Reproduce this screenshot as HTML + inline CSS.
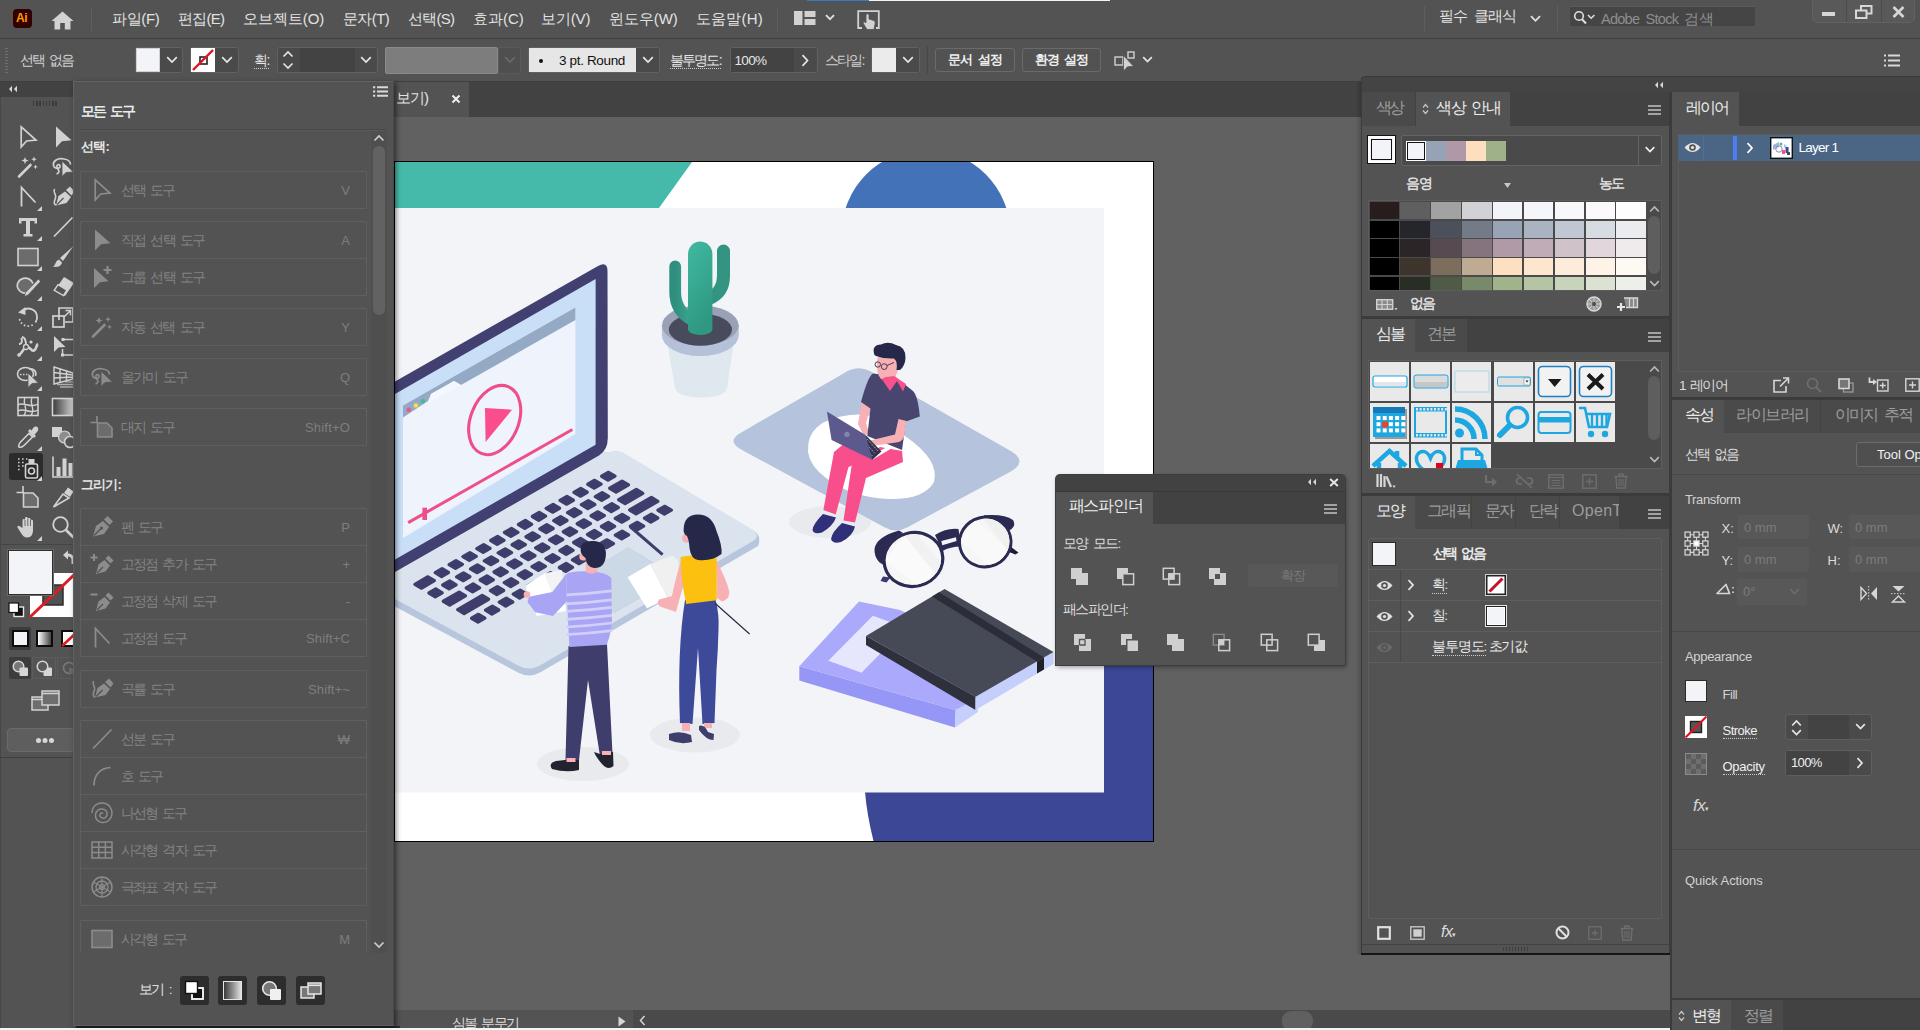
<!DOCTYPE html>
<html lang="ko"><head><meta charset="utf-8"><title>Ai</title>
<style>
*{box-sizing:border-box;margin:0;padding:0}
html,body{width:1920px;height:1030px;overflow:hidden;background:#535353;font-family:"Liberation Sans",sans-serif;color:#dedede;font-size:14px}
.a{position:absolute}
.t{position:absolute;white-space:nowrap;line-height:1;font-size:14px}
svg{position:absolute;overflow:visible}
.hl{background:#3e3e3e}
.dd{position:absolute;background:#454545;border:1px solid #5f5f5f;border-radius:3px}
.dim{color:#8a8a8a}
</style></head><body>
<!-- ===== DOC AREA ===== -->
<div class="a" style="left:394px;top:82px;width:968px;height:35px;background:#424242"></div>
<div class="a" style="left:394px;top:117px;width:968px;height:894px;background:#616161"></div>
<!-- doc tab -->
<div class="a" style="left:394px;top:82px;width:75px;height:35px;background:#535353"></div>
<div class="t" style="left:396px;top:90px;font-size:15px;color:#e4e4e4;letter-spacing:-1px">보기)</div>
<svg style="left:451px;top:94px" width="10" height="10" viewBox="0 0 10 10"><path d="M1.5,1.5 L8.5,8.5 M8.5,1.5 L1.5,8.5" stroke="#f0f0f0" stroke-width="2" fill="none"/></svg>
<!-- artboard border -->
<div class="a" style="left:394px;top:161px;width:760px;height:681px;background:#000"></div>
<svg id="art" style="left:395px;top:162px" width="758" height="679" viewBox="395 162 758 679">
<defs><linearGradient id="cg" x1="0" x2="0.35" y1="0" y2="1"><stop offset="0" stop-color="#41b9a1"/><stop offset="1" stop-color="#2f9882"/></linearGradient><linearGradient id="cg2" x1="0" x2="1"><stop offset="0" stop-color="#2f8f7e"/><stop offset="1" stop-color="#3aa892"/></linearGradient></defs>
<rect x="395" y="162" width="758" height="679" fill="#fff"/>
<polygon points="395,162 692,162 659,208 395,208" fill="#46baaa"/>
<clipPath id="ctop"><rect x="395" y="162" width="758" height="46"/></clipPath>
<circle cx="926" cy="234" r="84.4" fill="#4472b8" clip-path="url(#ctop)"/>
<path d="M1104,600 H1153 V841 H873.5 Q867,815 865,792 H1104 Z" fill="#3c4795"/>
<rect x="395" y="208" width="709" height="584.5" fill="#f3f4f8"/>
<ellipse cx="583" cy="764" rx="46" ry="17" fill="#e8eaee"/>
<ellipse cx="695" cy="735" rx="45" ry="17.5" fill="#e8eaee"/>
<ellipse cx="830" cy="522" rx="41" ry="16" fill="#e8eaee"/>
<path d="M395,470 L611,452 Q617,450 623,453 L754,531 Q762,536 758,546 L540,672.5 Q529,678.5 518,672.5 L395,606.5 Z" fill="#b7c5dd"/>
<path d="M395,470 L611,452 Q617,450 623,453 L753,530 Q761,536 753,541 L540,665.5 Q529,671.5 518,665.5 L395,599 Z" fill="#dbe4ee"/>
<polygon points="628.4,547.7 677,576.7 614.5,612.7 565.9,583.7" fill="#cbd8e5" stroke="#b9c8d8" stroke-width="0.8" stroke-dasharray="1.200 1.200"/>
<polygon points="608.6,472.3 601.6,476.3 608.0,480.1 615.0,476.1" fill="#3f3d6b" stroke="#3f3d6b" stroke-width="3.3" stroke-linejoin="round"/>
<polygon points="594.7,480.3 587.8,484.3 594.2,488.1 601.1,484.1" fill="#3f3d6b" stroke="#3f3d6b" stroke-width="3.3" stroke-linejoin="round"/>
<polygon points="580.8,488.4 573.9,492.4 580.3,496.2 587.2,492.2" fill="#3f3d6b" stroke="#3f3d6b" stroke-width="3.3" stroke-linejoin="round"/>
<polygon points="567.0,496.4 560.0,500.4 566.4,504.2 573.4,500.2" fill="#3f3d6b" stroke="#3f3d6b" stroke-width="3.3" stroke-linejoin="round"/>
<polygon points="553.1,504.4 546.2,508.4 552.5,512.2 559.5,508.2" fill="#3f3d6b" stroke="#3f3d6b" stroke-width="3.3" stroke-linejoin="round"/>
<polygon points="539.2,512.4 532.3,516.5 538.7,520.3 545.6,516.2" fill="#3f3d6b" stroke="#3f3d6b" stroke-width="3.3" stroke-linejoin="round"/>
<polygon points="525.4,520.5 518.4,524.5 524.8,528.3 531.7,524.3" fill="#3f3d6b" stroke="#3f3d6b" stroke-width="3.3" stroke-linejoin="round"/>
<polygon points="511.5,528.5 504.5,532.5 510.9,536.3 517.9,532.3" fill="#3f3d6b" stroke="#3f3d6b" stroke-width="3.3" stroke-linejoin="round"/>
<polygon points="497.6,536.5 490.7,540.5 497.1,544.3 504.0,540.3" fill="#3f3d6b" stroke="#3f3d6b" stroke-width="3.3" stroke-linejoin="round"/>
<polygon points="483.7,544.6 476.8,548.6 483.2,552.4 490.1,548.4" fill="#3f3d6b" stroke="#3f3d6b" stroke-width="3.3" stroke-linejoin="round"/>
<polygon points="469.9,552.6 462.9,556.6 469.3,560.4 476.3,556.4" fill="#3f3d6b" stroke="#3f3d6b" stroke-width="3.3" stroke-linejoin="round"/>
<polygon points="456.0,560.6 449.1,564.6 455.5,568.4 462.4,564.4" fill="#3f3d6b" stroke="#3f3d6b" stroke-width="3.3" stroke-linejoin="round"/>
<polygon points="442.1,568.7 435.2,572.7 441.6,576.5 448.5,572.5" fill="#3f3d6b" stroke="#3f3d6b" stroke-width="3.3" stroke-linejoin="round"/>
<polygon points="428.0,576.8 414.9,584.4 421.3,588.2 434.4,580.6" fill="#3f3d6b" stroke="#3f3d6b" stroke-width="3.3" stroke-linejoin="round"/>
<polygon points="622.1,481.1 609.7,488.3 616.1,492.1 628.5,484.9" fill="#3f3d6b" stroke="#3f3d6b" stroke-width="3.3" stroke-linejoin="round"/>
<polygon points="602.2,492.6 595.3,496.6 601.7,500.4 608.6,496.4" fill="#3f3d6b" stroke="#3f3d6b" stroke-width="3.3" stroke-linejoin="round"/>
<polygon points="588.4,500.7 581.4,504.7 587.8,508.5 594.8,504.5" fill="#3f3d6b" stroke="#3f3d6b" stroke-width="3.3" stroke-linejoin="round"/>
<polygon points="574.5,508.7 567.6,512.7 574.0,516.5 580.9,512.5" fill="#3f3d6b" stroke="#3f3d6b" stroke-width="3.3" stroke-linejoin="round"/>
<polygon points="560.6,516.7 553.7,520.7 560.1,524.5 567.0,520.5" fill="#3f3d6b" stroke="#3f3d6b" stroke-width="3.3" stroke-linejoin="round"/>
<polygon points="546.8,524.7 539.8,528.8 546.2,532.6 553.2,528.5" fill="#3f3d6b" stroke="#3f3d6b" stroke-width="3.3" stroke-linejoin="round"/>
<polygon points="532.9,532.8 526.0,536.8 532.3,540.6 539.3,536.6" fill="#3f3d6b" stroke="#3f3d6b" stroke-width="3.3" stroke-linejoin="round"/>
<polygon points="519.0,540.8 512.1,544.8 518.5,548.6 525.4,544.6" fill="#3f3d6b" stroke="#3f3d6b" stroke-width="3.3" stroke-linejoin="round"/>
<polygon points="505.2,548.8 498.2,552.9 504.6,556.7 511.5,552.6" fill="#3f3d6b" stroke="#3f3d6b" stroke-width="3.3" stroke-linejoin="round"/>
<polygon points="491.3,556.9 484.3,560.9 490.7,564.7 497.7,560.7" fill="#3f3d6b" stroke="#3f3d6b" stroke-width="3.3" stroke-linejoin="round"/>
<polygon points="477.4,564.9 470.5,568.9 476.9,572.7 483.8,568.7" fill="#3f3d6b" stroke="#3f3d6b" stroke-width="3.3" stroke-linejoin="round"/>
<polygon points="463.5,572.9 456.6,576.9 463.0,580.7 469.9,576.7" fill="#3f3d6b" stroke="#3f3d6b" stroke-width="3.3" stroke-linejoin="round"/>
<polygon points="449.7,581.0 442.7,585.0 449.1,588.8 456.1,584.8" fill="#3f3d6b" stroke="#3f3d6b" stroke-width="3.3" stroke-linejoin="round"/>
<polygon points="435.8,589.0 428.9,593.0 435.3,596.8 442.2,592.8" fill="#3f3d6b" stroke="#3f3d6b" stroke-width="3.3" stroke-linejoin="round"/>
<polygon points="636.4,489.5 618.7,499.8 625.1,503.6 642.8,493.3" fill="#3f3d6b" stroke="#3f3d6b" stroke-width="3.3" stroke-linejoin="round"/>
<polygon points="611.9,503.7 604.9,507.7 611.3,511.5 618.3,507.5" fill="#3f3d6b" stroke="#3f3d6b" stroke-width="3.3" stroke-linejoin="round"/>
<polygon points="598.0,511.8 591.1,515.8 597.5,519.6 604.4,515.6" fill="#3f3d6b" stroke="#3f3d6b" stroke-width="3.3" stroke-linejoin="round"/>
<polygon points="584.1,519.8 577.2,523.8 583.6,527.6 590.5,523.6" fill="#3f3d6b" stroke="#3f3d6b" stroke-width="3.3" stroke-linejoin="round"/>
<polygon points="570.3,527.8 563.3,531.8 569.7,535.6 576.6,531.6" fill="#3f3d6b" stroke="#3f3d6b" stroke-width="3.3" stroke-linejoin="round"/>
<polygon points="556.4,535.8 549.5,539.9 555.8,543.7 562.8,539.6" fill="#3f3d6b" stroke="#3f3d6b" stroke-width="3.3" stroke-linejoin="round"/>
<polygon points="542.5,543.9 535.6,547.9 542.0,551.7 548.9,547.7" fill="#3f3d6b" stroke="#3f3d6b" stroke-width="3.3" stroke-linejoin="round"/>
<polygon points="528.6,551.9 521.7,555.9 528.1,559.7 535.0,555.7" fill="#3f3d6b" stroke="#3f3d6b" stroke-width="3.3" stroke-linejoin="round"/>
<polygon points="514.8,559.9 507.8,564.0 514.2,567.8 521.2,563.7" fill="#3f3d6b" stroke="#3f3d6b" stroke-width="3.3" stroke-linejoin="round"/>
<polygon points="500.9,568.0 494.0,572.0 500.4,575.8 507.3,571.8" fill="#3f3d6b" stroke="#3f3d6b" stroke-width="3.3" stroke-linejoin="round"/>
<polygon points="487.0,576.0 480.1,580.0 486.5,583.8 493.4,579.8" fill="#3f3d6b" stroke="#3f3d6b" stroke-width="3.3" stroke-linejoin="round"/>
<polygon points="473.2,584.0 466.2,588.0 472.6,591.8 479.6,587.8" fill="#3f3d6b" stroke="#3f3d6b" stroke-width="3.3" stroke-linejoin="round"/>
<polygon points="459.2,592.1 443.3,601.3 449.7,605.1 465.5,595.9" fill="#3f3d6b" stroke="#3f3d6b" stroke-width="3.3" stroke-linejoin="round"/>
<polygon points="651.4,497.5 629.7,510.0 636.1,513.9 657.8,501.3" fill="#3f3d6b" stroke="#3f3d6b" stroke-width="3.3" stroke-linejoin="round"/>
<polygon points="622.2,514.4 615.2,518.4 621.6,522.2 628.6,518.2" fill="#3f3d6b" stroke="#3f3d6b" stroke-width="3.3" stroke-linejoin="round"/>
<polygon points="608.3,522.5 601.4,526.5 607.8,530.3 614.7,526.3" fill="#3f3d6b" stroke="#3f3d6b" stroke-width="3.3" stroke-linejoin="round"/>
<polygon points="594.4,530.5 587.5,534.5 593.9,538.3 600.8,534.3" fill="#3f3d6b" stroke="#3f3d6b" stroke-width="3.3" stroke-linejoin="round"/>
<polygon points="580.6,538.5 573.6,542.5 580.0,546.3 587.0,542.3" fill="#3f3d6b" stroke="#3f3d6b" stroke-width="3.3" stroke-linejoin="round"/>
<polygon points="566.7,546.5 559.8,550.6 566.2,554.4 573.1,550.3" fill="#3f3d6b" stroke="#3f3d6b" stroke-width="3.3" stroke-linejoin="round"/>
<polygon points="552.8,554.6 545.9,558.6 552.3,562.4 559.2,558.4" fill="#3f3d6b" stroke="#3f3d6b" stroke-width="3.3" stroke-linejoin="round"/>
<polygon points="539.0,562.6 532.0,566.6 538.4,570.4 545.4,566.4" fill="#3f3d6b" stroke="#3f3d6b" stroke-width="3.3" stroke-linejoin="round"/>
<polygon points="525.1,570.6 518.2,574.6 524.5,578.5 531.5,574.4" fill="#3f3d6b" stroke="#3f3d6b" stroke-width="3.3" stroke-linejoin="round"/>
<polygon points="511.2,578.7 504.3,582.7 510.7,586.5 517.6,582.5" fill="#3f3d6b" stroke="#3f3d6b" stroke-width="3.3" stroke-linejoin="round"/>
<polygon points="497.4,586.7 490.4,590.7 496.8,594.5 503.7,590.5" fill="#3f3d6b" stroke="#3f3d6b" stroke-width="3.3" stroke-linejoin="round"/>
<polygon points="482.2,595.4 457.7,609.7 464.1,613.5 488.6,599.2" fill="#3f3d6b" stroke="#3f3d6b" stroke-width="3.3" stroke-linejoin="round"/>
<polygon points="665.0,506.3 658.0,510.3 664.4,514.1 671.3,510.1" fill="#3f3d6b" stroke="#3f3d6b" stroke-width="3.3" stroke-linejoin="round"/>
<polygon points="651.4,514.2 644.4,518.2 650.8,522.0 657.8,518.0" fill="#3f3d6b" stroke="#3f3d6b" stroke-width="3.3" stroke-linejoin="round"/>
<polygon points="637.4,522.3 630.4,526.3 636.8,530.1 643.7,526.1" fill="#3f3d6b" stroke="#3f3d6b" stroke-width="3.3" stroke-linejoin="round"/>
<polygon points="622.2,531.1 615.3,535.1 621.7,538.9 628.6,534.9" fill="#3f3d6b" stroke="#3f3d6b" stroke-width="3.3" stroke-linejoin="round"/>
<polygon points="607.1,539.8 600.2,543.8 606.6,547.6 613.5,543.6" fill="#3f3d6b" stroke="#3f3d6b" stroke-width="3.3" stroke-linejoin="round"/>
<polygon points="592.6,548.2 585.6,552.3 592.0,556.1 598.9,552.1" fill="#3f3d6b" stroke="#3f3d6b" stroke-width="3.3" stroke-linejoin="round"/>
<polygon points="579.4,555.9 572.4,559.9 578.8,563.7 585.8,559.7" fill="#3f3d6b" stroke="#3f3d6b" stroke-width="3.3" stroke-linejoin="round"/>
<polygon points="566.2,563.5 559.3,567.5 565.7,571.3 572.6,567.3" fill="#3f3d6b" stroke="#3f3d6b" stroke-width="3.3" stroke-linejoin="round"/>
<polygon points="550.5,572.6 543.6,576.6 550.0,580.4 556.9,576.4" fill="#3f3d6b" stroke="#3f3d6b" stroke-width="3.3" stroke-linejoin="round"/>
<polygon points="534.0,582.1 527.1,586.2 533.5,590.0 540.4,585.9" fill="#3f3d6b" stroke="#3f3d6b" stroke-width="3.3" stroke-linejoin="round"/>
<polygon points="520.2,590.2 513.2,594.2 519.6,598.0 526.5,594.0" fill="#3f3d6b" stroke="#3f3d6b" stroke-width="3.3" stroke-linejoin="round"/>
<polygon points="506.3,598.2 499.3,602.2 505.7,606.0 512.7,602.0" fill="#3f3d6b" stroke="#3f3d6b" stroke-width="3.3" stroke-linejoin="round"/>
<polygon points="492.4,606.2 485.5,610.2 491.9,614.0 498.8,610.0" fill="#3f3d6b" stroke="#3f3d6b" stroke-width="3.3" stroke-linejoin="round"/>
<polygon points="478.5,614.3 471.6,618.3 478.0,622.1 484.9,618.1" fill="#3f3d6b" stroke="#3f3d6b" stroke-width="3.3" stroke-linejoin="round"/>
<path d="M395,381.5 L598,266 Q607.5,261 607.5,271 L607.8,438 Q607.8,450 599,455.5 L395,572 Z" fill="#414070"/>
<polygon points="395,394 595.6,279 595.6,444.8 395,559.5" fill="#c9dff8"/>
<polygon points="403,405.5 575.4,307.4 575.4,434 403,538" fill="#eef3fc"/>
<polygon points="403,405.5 575.4,307.4 575.4,320 461,385 454,381 431,394 428,401 403,417.6" fill="#94a9c3"/>
<polygon points="431,394 454,381 461,385 429,403" fill="#f4f7fd"/>
<circle cx="408.8" cy="409.7" r="2.3" fill="#ee5588"/><circle cx="415.9" cy="405.5" r="2.3" fill="#f3e04f"/><circle cx="423" cy="401.3" r="2.3" fill="#46b89d"/>
<ellipse cx="494.5" cy="420" rx="24" ry="36" transform="rotate(22 494.5 420.5)" fill="none" stroke="#ef4f88" stroke-width="3.1"/>
<polygon points="485,408 512,409.7 485.6,442" fill="#fa4d8c"/>
<line x1="572.4" y1="429.5" x2="408.2" y2="522.6" stroke="#ef4f88" stroke-width="3"/>
<line x1="424.7" y1="507.7" x2="424.7" y2="520" stroke="#ef4f88" stroke-width="4.6"/>
<path d="M666.500,338 L675,388 Q677,394 686,396 Q700,399 716,396 Q725,394 727,388 L734.500,338 Z" fill="#dfe7ef"/>
<ellipse cx="700.3" cy="335.5" rx="38.400" ry="20.500" fill="#b5c0d9"/><rect x="661.9" y="325.4" width="76.800" height="10.100" fill="#b5c0d9"/>
<ellipse cx="700.3" cy="325.4" rx="38.400" ry="20" fill="#9aa1b6"/>
<ellipse cx="700.4" cy="329.6" rx="31.600" ry="16.200" fill="#474b5c"/>
<path d="M675.2,266.500 V292 Q675.200,311 692,320" fill="none" stroke="url(#cg2)" stroke-width="11.800" stroke-linecap="round"/>
<path d="M723.5,251 V276 Q723.500,293 708,299" fill="none" stroke="#339581" stroke-width="13" stroke-linecap="round"/>
<path d="M688,253.800 a12.200,12.200 0 0 1 24.400,0 V329 a12.200,6 0 0 1 -24.400,0 Z" fill="url(#cg)"/>
<path d="M743,431.5 L846,372 Q858,365 870,371 L1009,450 Q1030,461 1009,472.5 L908,527 Q896,534 884,527 L743,450.5 Q724,441 743,431.5 Z" fill="#b5c3dc"/>
<path d="M808,452 Q806,420 850,415 Q880,411 905,436 Q940,460 934,482 Q924,500 888,499 Q850,497 826,478 Q810,466 808,452 Z" fill="#fff"/>
<path d="M902,451 L880,447 L852,463 L843.500,520.500 L855,522.500 L866,478 L903,462 Z" fill="#f94e8c"/>
<path d="M872,447 L846,442 L834,452 L823.400,510 L835.700,514.500 L848.500,467 L876,456 Z" fill="#f94e8c"/>
<path d="M823,514 L836,517.500 Q833,526 822,532.500 Q814,535 812.500,530 Q813,524 823,514 Z" fill="#2f2f7a"/>
<path d="M842,523 L855,526.500 Q853,536 841,542 Q833,544.500 831,539 Q832,532 842,523 Z" fill="#2f2f7a"/>
<path d="M862,402 L858,424 L864,436 L869,433 L866,423 L870.500,407 Z" fill="#f7b1b5"/>
<path d="M873,373.500 Q868,376 861,402 L870.500,408.500 L867.300,436 L902,450 L906,421.500 L919.800,416.500 Q918,396 913,391 L894,376 Z" fill="#48466f"/>
<path d="M906.500,421 L904,437 Q902,442 896,442.500 L871,446 L868,441 L895,434.500 L898.500,419 Z" fill="#f7b1b5"/>
<path d="M877,360 Q876,374 881,379 L893,383 L899,368 L896,352 L880,352 Z" fill="#f7b1b5"/>
<polygon points="881.5,378.800 890,391 897,381 903,391.500 906,384 894,376 886,377" fill="#f8528d"/>
<path d="M874.500,355 Q871,345 881,344.500 Q888,341 896,345 Q906,347 905.500,358 Q905,366 900,370 L896.500,370 Q898,362 894,358.500 Q884,359 876,356 Z" fill="#252849"/>
<circle cx="877.8" cy="364.5" r="2.700" fill="none" stroke="#3a2a4a" stroke-width="0.900"/><circle cx="884.2" cy="366.6" r="2.900" fill="none" stroke="#3a2a4a" stroke-width="0.900"/><line x1="887" y1="365.5" x2="894" y2="362.500" stroke="#3a2a4a" stroke-width="0.900"/>
<polygon points="872.3,459.700 892.700,447.700 890,445.500 870,456" fill="#fff"/>
<polygon points="865.6,434.900 881.500,451.600 872.300,459.700 860,449" fill="#34334f"/>
<path d="M867,439 L878,451 M864.500,442 L875,453.500 M862.500,445.500 L873,456.500" stroke="#cfd3e4" stroke-width="0.800" stroke-dasharray="1.200 1"/>
<polygon points="826.9,411.400 865.600,434.900 872.300,459.700 831.600,440" fill="#5c5a8c"/>
<circle cx="846.9" cy="434.4" r="2.700" fill="#8583ad"/>
<path d="M874.5,549 Q876,537 899,530.5 L903,533 Q888,540 884.5,553 Q883,560 885,566 L879,562 Q874,556 874.5,549 Z" fill="#2b2a52"/>
<path d="M883,576.5 L880.500,581 L886.500,582.500 L890.500,577.500 Z" fill="#3a3970"/>
<path d="M984,515.300 Q1004,513.500 1013,520 Q1016.500,525 1011,529.500 L1007,531 Q1003,521 985,518.500 Z" fill="#2b2a52"/>
<path d="M1010.500,546.500 L1018.500,552.500 L1015.500,554.500 L1009,552 Z" fill="#1d1c3a"/>
<path d="M935,535 Q947,527.500 958.500,529 L961,546.500 Q950,546.500 942.500,551 Z" fill="#2b2a52"/>
<polygon points="941.3,541 956,537.300 956.500,541 942.300,545.300" fill="#f3f4f8"/>
<ellipse cx="913.4" cy="559.5" rx="29.500" ry="26.800" transform="rotate(-14 913.4 559.5)" fill="#f6f6f6" stroke="#2b2a52" stroke-width="3.200"/>
<ellipse cx="985.2" cy="542" rx="25.800" ry="24.800" transform="rotate(-14 985.2 542)" fill="#f6f6f6" stroke="#2b2a52" stroke-width="3"/>
<clipPath id="lc1"><ellipse cx="913.4" cy="559.5" rx="28" ry="25.300" transform="rotate(-14 913.4 559.5)"/></clipPath><clipPath id="lc2"><ellipse cx="985.2" cy="542" rx="24.300" ry="23.300" transform="rotate(-14 985.2 542)"/></clipPath>
<g clip-path="url(#lc1)"><polygon points="885,560 905,536 955,590 935,600" fill="#fafafa"/><polygon points="900,530 912,528 960,585 950,592" fill="#f1f1f1"/></g>
<g clip-path="url(#lc2)"><polygon points="960,540 975,520 1020,560 1000,575" fill="#f9f9f9"/><polygon points="978,512 990,512 1022,548 1012,556" fill="#f0f0f0"/></g>
<polygon points="799.3,666.2 955.7,710 955,727.6 799.3,680.6" fill="#9596f6"/>
<polygon points="955.7,710 978,698 978,712 955,727.6" fill="#c4d0fb"/>
<polygon points="859,601.4 799.3,666.2 955.7,710 1030,670 900,610" fill="#aaa9fb"/>
<polygon points="872.8,615.7 906,627.5 861.5,672.8 828.3,660.8" fill="#e6e6fd"/>
<polygon points="866,636 975.5,696.7 975.5,710 866,645" fill="#2e303b"/>
<polygon points="975.5,696.7 1053.5,652 1053.5,664 975.5,710" fill="#c4d0fb"/>
<polygon points="944.6,589 1053.5,652 975.5,696.7 866,636" fill="#464a57"/>
<polygon points="932,596.4 939,592.2 1044,657.4 1037,661.5" fill="#2b2d38"/>
<polygon points="1037,661.5 1044,657.4 1044,669.5 1037,673.5" fill="#1f2029"/>
<path d="M568.5,646 L607,644 L612.5,754 L600,756 L588,680 L579,760 L565.5,760 Z" fill="#3f3d6b"/>
<path d="M565,760 L579,760 L579,770 Q566,773 552,769 Q548,763 556,761 Z" fill="#22232f"/><path d="M600,754 L613,752 L613.5,766 Q608,771 602,764 Q596,757 594,752 Z" fill="#22232f"/>
<rect x="566.5" y="758" width="9" height="4" fill="#f7b1b5"/><rect x="602" y="751" width="9" height="4" fill="#f7b1b5"/>
<polygon points="525,585.800 544.500,573.400 561.600,570.300 566,611 536.800,616" fill="#fff"/>
<polygon points="544.5,573.400 561.600,570.300 566,600 552,594" fill="#f3f3f3"/>
<path d="M566.3,574 L552.300,592 L529,596.700 L527.400,602 L535.200,612.200 L553,616 L567,601.300 Z" fill="#a9a5f5"/>
<circle cx="527" cy="594.5" r="3.300" fill="#f7b1b5"/>
<path d="M566.3,574 Q572,570.500 590,571.500 Q606,572 611.300,578 L612,621.500 Q611,634 606.700,644.800 L569.400,647 L567,601 Z" fill="#a9a5f5"/>
<path d="M566.5,594.8 Q590,593.5 612,590.8" fill="none" stroke="#d3cffb" stroke-width="2.700"/>
<path d="M566.5,603.8 Q590,602.5 612,599.8" fill="none" stroke="#d3cffb" stroke-width="2.700"/>
<path d="M566.5,611.4 Q590,610.1 612,607.4" fill="none" stroke="#d3cffb" stroke-width="2.700"/>
<path d="M566.5,619.3 Q590,618.0 612,615.3" fill="none" stroke="#d3cffb" stroke-width="2.700"/>
<path d="M566.5,627.0 Q590,625.7 612,623.0" fill="none" stroke="#d3cffb" stroke-width="2.700"/>
<path d="M566.5,634.6 Q590,633.3 612,630.6" fill="none" stroke="#d3cffb" stroke-width="2.700"/>
<path d="M585.7,560 L597.300,560 L597.300,572 Q591,575 585.700,572 Z" fill="#f7b1b5"/>
<circle cx="583.3" cy="556.5" r="4" fill="#f7b1b5"/>
<path d="M580.5,549 Q581,540.500 593,541 Q606.500,541.500 605.900,555 Q605,568.500 594,568 Q586.500,567 585.500,558 Q580.500,555 580.500,549 Z" fill="#252849"/>
<polygon points="627.6,577.200 650.200,564 668,598.200 647,608.300" fill="#fff"/>
<polygon points="650.2,564 672,555.500 677.400,559.400 684,592 668,598.200" fill="#f0f0f0"/>
<path d="M685,600 L715.400,599 Q719.500,615 718.500,630 Q718,650 716.500,670 L714.500,723 L702.500,724 L698,648 L692.500,724 L680,723 Q677,650 685,600 Z" fill="#3d4a9a"/>
<rect x="682" y="723" width="8" height="8" fill="#f7b1b5"/><rect x="704" y="723" width="8" height="5" fill="#f7b1b5"/>
<path d="M669,734 Q680,730 691,735 L692,742 Q680,745 669,740 Z" fill="#3f3d6b"/><path d="M699,726 Q704,724 708,732 L714,734 L713.5,740 Q706,740 699,730 Z" fill="#3f3d6b"/>
<path d="M681.5,559 Q675,580 672,596 L659,599.500 Q656,603 660,606.500 L676,612 Q682,590 688,568 Z" fill="#f7b1b5"/>
<path d="M716,560 Q726,578 729.400,592 Q729,600 722,601.500 L717,598 Z" fill="#f7b1b5"/>
<path d="M680.5,557 Q692,553.500 716.500,558 L716.800,600.300 L686.200,604 Q681,580 680.500,557 Z" fill="#fcc010"/>
<circle cx="687" cy="538" r="5" fill="#f7b1b5"/>
<path d="M683.6,530 Q683.600,515 698,514.600 Q712,514.600 716.500,531 Q722.500,546 721.500,554 Q712,561.500 698,560 Q691,559 689.500,548 Q689,540 687,536 Q683.600,534 683.600,530 Z" fill="#252849"/>
<line x1="630" y1="526.5" x2="662.6" y2="554.7" stroke="#3f3d6b" stroke-width="3"/>
<line x1="715" y1="603.2" x2="749.6" y2="634" stroke="#2b2b45" stroke-width="1.300"/>
</svg>
<!-- ===== STATUS / SCROLL ===== -->
<div class="a" style="left:394px;top:1010px;width:239px;height:18px;background:#535353"></div>
<div class="a" style="left:633px;top:1010px;width:729px;height:18px;background:#4a4a4a"></div>
<div class="a" style="left:394px;top:1010px;width:968px;height:18px;overflow:hidden"><div class="t" style="left:58px;top:6px;font-size:14px;color:#dcdcdc;word-spacing:3px;letter-spacing:-1.832px">심볼 분무기</div></div>
<svg style="left:618px;top:1016px" width="8" height="11" viewBox="0 0 8 11"><path d="M0.500,0.500 L7.500,5.500 L0.500,10.500 Z" fill="#d6d6d6"/></svg>
<svg style="left:639px;top:1015px" width="7" height="11" viewBox="0 0 7 11"><path d="M5.500,1 L1.500,5.500 L5.500,10" stroke="#d6d6d6" stroke-width="1.500" fill="none"/></svg>
<div class="a" style="left:1282px;top:1011px;width:31px;height:20px;background:#606060;border-radius:9px"></div>
<div class="a" style="left:0;top:1026px;width:400px;height:3px;background:#2a2a2a"></div>
<div class="a" style="left:0;top:1028.4px;width:1670px;height:1.6px;background:#f4f4f4;z-index:50"></div>
<!-- ===== MENU BAR ===== -->
<div class="a" style="left:0;top:0;width:1920px;height:38px;background:#535353"></div>
<div class="a hl" style="left:0;top:38px;width:1920px;height:1px"></div>
<div class="a" style="left:807px;top:0;width:62px;height:1px;background:#2f7fc1"></div>
<div class="a" style="left:869px;top:0;width:241px;height:1px;background:#f4f4f4"></div>
<!-- Ai logo -->
<div class="a" style="left:13px;top:9px;width:19px;height:19px;border-radius:4px;background:#330000"></div>
<div class="t" style="left:16px;top:12px;font-size:12px;font-weight:bold;color:#ff9a00;letter-spacing:-0.3px">Ai</div>
<!-- home -->
<svg style="left:51px;top:11px" width="23" height="19" viewBox="0 0 23 19"><path d="M11.5,0.5 L22.5,10 L19.5,10 L19.5,18.5 L13.8,18.5 L13.8,12 L9.2,12 L9.2,18.5 L3.5,18.5 L3.5,10 L0.5,10 Z" fill="#d2d2d2"/></svg>
<div class="a" style="left:91px;top:7px;width:1px;height:24px;background:#5f5f5f"></div>
<div class="t mi" style="left:112px;letter-spacing:-0.331px">파일(F)</div>
<div class="t mi" style="left:178px;letter-spacing:-0.75px">편집(E)</div>
<div class="t mi" style="left:243px;letter-spacing:-0.06px">오브젝트(O)</div>
<div class="t mi" style="left:343px;letter-spacing:-0.581px">문자(T)</div>
<div class="t mi" style="left:408px;letter-spacing:-0.75px">선택(S)</div>
<div class="t mi" style="left:473px;letter-spacing:-0.016px">효과(C)</div>
<div class="t mi" style="left:541px;letter-spacing:-0.15px">보기(V)</div>
<div class="t mi" style="left:609px;letter-spacing:-0.068px">윈도우(W)</div>
<div class="t mi" style="left:696px;letter-spacing:0.195px">도움말(H)</div>
<style>.mi{top:11px;font-size:15px;color:#e2e2e2}</style>
<div class="a" style="left:777px;top:7px;width:1px;height:24px;background:#5f5f5f"></div>
<!-- workspace icon -->
<svg style="left:794px;top:11px" width="22" height="15" viewBox="0 0 22 15"><rect x="0" y="0" width="8.5" height="14" fill="#d2d2d2"/><rect x="10.5" y="0" width="11" height="6" fill="#d2d2d2"/><rect x="10.5" y="8" width="11" height="6" fill="#d2d2d2"/></svg>
<svg style="left:825px;top:14px" width="10" height="7" viewBox="0 0 10 7"><path d="M1,1.2 L5,5.2 L9,1.2" stroke="#e0e0e0" stroke-width="1.8" fill="none"/></svg>
<!-- touch icon -->
<svg style="left:857px;top:10px" width="23" height="20" viewBox="0 0 23 20"><path d="M5,18 H1.2 V1.2 H21.8 V18 H19" stroke="#d2d2d2" stroke-width="1.8" fill="none"/><path d="M9,4.5 q1.6,-1.4 3,0 V9 l5,1.6 q1.6,0.8 1.2,2.6 L17,19.5 H10 L6,13 q0.4,-1.8 2.2,-0.8 L9,13 Z" fill="#d2d2d2" stroke="#535353" stroke-width="0.8"/></svg>
<!-- workspace switcher -->
<div class="a" style="left:1424px;top:6px;width:1px;height:25px;background:#5f5f5f"></div>
<div class="t" style="left:1439px;top:8px;font-size:15px;color:#e2e2e2;letter-spacing:0.4px;word-spacing:3px;letter-spacing:-0.745px">필수 클래식</div>
<svg style="left:1530px;top:15px" width="11" height="8" viewBox="0 0 11 8"><path d="M1,1.2 L5.5,5.8 L10,1.2" stroke="#e0e0e0" stroke-width="1.8" fill="none"/></svg>
<div class="a" style="left:1557px;top:6px;width:1px;height:25px;background:#5f5f5f"></div>
<!-- search -->
<div class="a" style="left:1570px;top:6px;width:185px;height:20px;background:#454545;border-top:1px solid #5a5a5a"></div>
<svg style="left:1573px;top:10px" width="24" height="15" viewBox="0 0 24 15"><circle cx="6" cy="6" r="4.3" stroke="#e0e0e0" stroke-width="1.6" fill="none"/><path d="M9,9.3 L13,13.5" stroke="#e0e0e0" stroke-width="2"/><path d="M15,5 L18.2,8.2 L21.4,5" stroke="#e0e0e0" stroke-width="1.5" fill="none"/></svg>
<div class="t" style="left:1601px;top:12px;font-size:14.5px;color:#8e8e8e;word-spacing:3px;letter-spacing:-0.732px">Adobe Stock 검색</div>
<div class="a" style="left:1570px;top:26px;width:185px;height:6px;background:#535353"></div>
<!-- window controls -->
<div class="a" style="left:1812px;top:-3px;width:103px;height:26px;background:#595959;border:1px solid #626262;border-radius:5px"></div>
<div class="a" style="left:1846px;top:0;width:1px;height:22px;background:#4c4c4c"></div>
<div class="a" style="left:1881px;top:0;width:1px;height:22px;background:#4c4c4c"></div>
<div class="a" style="left:1822px;top:12px;width:13px;height:4px;background:#d6d6d6"></div>
<svg style="left:1855px;top:5px" width="18" height="15" viewBox="0 0 18 15"><rect x="6" y="1" width="10.5" height="7.5" stroke="#d6d6d6" stroke-width="2" fill="#595959"/><rect x="1" y="5.5" width="10.5" height="7.5" stroke="#d6d6d6" stroke-width="2" fill="#595959"/></svg>
<svg style="left:1892px;top:6px" width="13" height="12" viewBox="0 0 13 12"><path d="M1.5,1 L11.5,11 M11.5,1 L1.5,11" stroke="#d6d6d6" stroke-width="2.6"/></svg>
<!-- ===== CONTROL BAR ===== -->
<div class="a" style="left:0;top:39px;width:1920px;height:42px;background:#535353"></div>
<div class="a hl" style="left:0;top:81px;width:1362px;height:1px"></div>
<div class="a" style="left:5px;top:48px;width:3px;height:25px;background:repeating-linear-gradient(#6e6e6e 0 1px,transparent 1px 3px)"></div>
<div class="t" style="left:20px;top:53px;font-size:14px;color:#cfcfcf;letter-spacing:0.3px;word-spacing:3px;letter-spacing:-2.033px">선택 없음</div>
<style>
.cb{position:absolute;top:47px;height:26px;border:1px solid #616161;border-radius:3px;background:#4a4a4a}
.cv{position:absolute}
</style>
<!-- fill -->
<div class="cb" style="left:135px;width:48px"></div>
<div class="a" style="left:136px;top:48px;width:24px;height:24px;background:#f3f4f8;border:1px solid #d0d0d0"></div>
<svg class="cv" style="left:166px;top:56px" width="12" height="8" viewBox="0 0 12 8"><path d="M1.2,1.2 L6,6 L10.8,1.2" stroke="#e6e6e6" stroke-width="1.7" fill="none"/></svg>
<!-- stroke -->
<div class="cb" style="left:190px;width:49px"></div>
<svg style="left:191px;top:48px" width="24" height="24" viewBox="0 0 24 24"><rect width="24" height="24" fill="#fff"/><rect x="9" y="9" width="7" height="7" fill="none" stroke="#222" stroke-width="1.6"/><path d="M2,22 L22,2" stroke="#e0141e" stroke-width="2.4"/></svg>
<svg class="cv" style="left:221px;top:56px" width="12" height="8" viewBox="0 0 12 8"><path d="M1.2,1.2 L6,6 L10.8,1.2" stroke="#e6e6e6" stroke-width="1.7" fill="none"/></svg>
<div class="t" style="left:254px;top:53px;font-size:14px;color:#e6e6e6;border-bottom:1px dotted #cfcfcf;padding-bottom:1px;letter-spacing:-1.533px">획:</div>
<!-- stroke weight -->
<div class="cb" style="left:277px;width:101px"></div>
<div class="a" style="left:300px;top:48px;width:55px;height:24px;background:#434343"></div>
<svg class="cv" style="left:282px;top:50px" width="12" height="20" viewBox="0 0 12 20"><path d="M1.5,6.5 L6,2 L10.5,6.5 M1.5,13.5 L6,18 L10.5,13.5" stroke="#e6e6e6" stroke-width="1.6" fill="none"/></svg>
<svg class="cv" style="left:360px;top:56px" width="12" height="8" viewBox="0 0 12 8"><path d="M1.2,1.2 L6,6 L10.8,1.2" stroke="#e6e6e6" stroke-width="1.7" fill="none"/></svg>
<!-- width profile -->
<div class="a" style="left:385px;top:47px;width:113px;height:27px;background:#7d7d7d;border:1px solid #8a8a8a;border-radius:2px"></div>
<div class="a" style="left:498px;top:47px;width:23px;height:27px;background:#4f4f4f;border:1px solid #5a5a5a;border-radius:0 3px 3px 0"></div>
<svg class="cv" style="left:504px;top:56px" width="12" height="8" viewBox="0 0 12 8"><path d="M1.2,1.2 L6,6 L10.8,1.2" stroke="#6a6a6a" stroke-width="1.7" fill="none"/></svg>
<!-- brush -->
<div class="cb" style="left:528px;width:132px"></div>
<div class="a" style="left:529px;top:48px;width:107px;height:24px;background:#e6e6e6"></div>
<div class="a" style="left:539px;top:58.5px;width:4px;height:4px;border-radius:2px;background:#111"></div>
<div class="t" style="left:559px;top:54px;font-size:13.5px;color:#111;letter-spacing:-0.25px;letter-spacing:-0.347px">3 pt. Round</div>
<svg class="cv" style="left:642px;top:56px" width="12" height="8" viewBox="0 0 12 8"><path d="M1.2,1.2 L6,6 L10.8,1.2" stroke="#e6e6e6" stroke-width="1.7" fill="none"/></svg>
<div class="t" style="left:669.5px;top:53px;font-size:14px;color:#e6e6e6;border-bottom:1px dotted #cfcfcf;padding-bottom:1px;letter-spacing:-0.3px;letter-spacing:-1.678px">불투명도:</div>
<!-- opacity -->
<div class="cb" style="left:730px;width:88px"></div>
<div class="a" style="left:731px;top:48px;width:63px;height:24px;background:#434343"></div>
<div class="t" style="left:734.5px;top:54px;font-size:13.5px;color:#e6e6e6;letter-spacing:-0.3px;letter-spacing:-0.638px">100%</div>
<svg class="cv" style="left:801px;top:54px" width="8" height="13" viewBox="0 0 8 13"><path d="M1.5,1.2 L6.5,6.5 L1.5,11.8" stroke="#e6e6e6" stroke-width="1.7" fill="none"/></svg>
<div class="t" style="left:824.5px;top:53px;font-size:14px;color:#cfcfcf;letter-spacing:0.2px;letter-spacing:-1.66px">스타일:</div>
<!-- style -->
<div class="cb" style="left:871px;width:49px"></div>
<div class="a" style="left:872px;top:48px;width:24px;height:24px;background:#ebebeb"></div>
<svg class="cv" style="left:902px;top:56px" width="12" height="8" viewBox="0 0 12 8"><path d="M1.2,1.2 L6,6 L10.8,1.2" stroke="#e6e6e6" stroke-width="1.7" fill="none"/></svg>
<div class="a" style="left:927px;top:46px;width:1px;height:28px;background:#474747"></div>
<!-- buttons -->
<div class="a btn" style="left:935px;width:80px;word-spacing:3px;letter-spacing:-0.925px">문서 설정</div>
<div class="a btn" style="left:1022px;width:79px;word-spacing:3px;letter-spacing:-0.925px">환경 설정</div>
<style>.btn{top:48px;height:24px;border:1px solid #6a6a6a;border-radius:3px;background:#525252;color:#efefef;font-size:13px;font-weight:bold;text-align:center;line-height:22px;letter-spacing:0.2px}</style>
<svg style="left:1114px;top:50px" width="22" height="22" viewBox="0 0 22 22"><rect x="1" y="7" width="8" height="8" fill="none" stroke="#d2d2d2" stroke-width="1.4"/><rect x="14" y="2" width="6" height="6" fill="none" stroke="#d2d2d2" stroke-width="1.4"/><path d="M9.5,5.5 L9.5,21 L13.5,16.8 L19.5,16.2 Z" fill="#d2d2d2" stroke="#535353" stroke-width="0.8"/></svg>
<svg class="cv" style="left:1142px;top:56px" width="11" height="8" viewBox="0 0 11 8"><path d="M1.2,1.2 L5.5,5.6 L9.8,1.2" stroke="#e6e6e6" stroke-width="1.7" fill="none"/></svg>
<!-- list icon far right -->
<svg style="left:1884px;top:54px" width="16" height="13" viewBox="0 0 16 13"><path d="M0,1.5 H2 M4,1.5 H16 M0,6.5 H2 M4,6.5 H16 M0,11.5 H2 M4,11.5 H16" stroke="#d8d8d8" stroke-width="2"/></svg>
<!-- ===== LEFT TOOLBAR ===== -->
<div class="a" style="left:0;top:82px;width:76px;height:948px;background:#535353"></div>
<div class="a" style="left:0;top:82px;width:1px;height:946px;background:#474747"></div>
<div class="a" style="left:0;top:82px;width:74px;height:15px;background:#424242"></div>
<svg style="left:8px;top:85px" width="10" height="8" viewBox="0 0 10 8"><path d="M4,0.8 L1,4 L4,7.2 Z M9,0.8 L6,4 L9,7.2 Z" fill="#d8d8d8"/></svg>
<div class="a" style="left:33px;top:101px;width:24px;height:5px;background:repeating-linear-gradient(90deg,#3b3b3b 0 1.4px,transparent 1.4px 3.2px)"></div>
<div class="a" style="left:0;top:544px;width:74px;height:1px;background:#454545"></div>
<div class="a" style="left:0;top:757px;width:74px;height:1px;background:#3f3f3f"></div>
<svg width="0" height="0" style="left:0;top:0"><defs>
<symbol id="i-sel" viewBox="0 0 24 24"><path d="M5.2,1.8 L5.2,22 L10.6,16 L20,15 Z" fill="none" stroke="currentColor" stroke-width="1.7" stroke-linejoin="miter"/></symbol>
<symbol id="i-dsel" viewBox="0 0 24 24"><path d="M5,1.5 L5,22.5 L11,16.2 L20.5,15.2 Z" fill="currentColor"/></symbol>
<symbol id="i-gsel" viewBox="0 0 24 24"><path d="M4,3 L4,23 L10,17.2 L18.5,16.2 Z" fill="currentColor"/><path d="M17.5,1 V9 M13.5,5 H21.500" stroke="currentColor" stroke-width="2.2"/></symbol>
<symbol id="i-wand" viewBox="0 0 24 24"><path d="M3,21.5 L14.5,10" stroke="currentColor" stroke-width="2.6" stroke-linecap="round"/><path d="M9,2 l1,2.6 2.600,1 -2.600,1 -1,2.600 -1,-2.600 -2.600,-1 2.600,-1z M18,1.500 l0.800,2 2,0.800 -2,0.800 -0.800,2 -0.800,-2 -2,-0.800 2,-0.800z M19.500,9.500 l0.700,1.700 1.700,0.700 -1.700,0.700 -0.700,1.700 -0.700,-1.700 -1.700,-0.700 1.700,-0.700z" fill="currentColor"/></symbol>
<symbol id="i-lasso" viewBox="0 0 24 24"><path d="M13,4 C6,2.500 1.500,6.500 2.500,10.500 C3.200,13 6,14 8,13 C10,12 9,9 6.800,9.800 C5,10.500 6,13.500 7.500,15 C8.500,16.500 7.500,18.500 5.500,19" fill="none" stroke="currentColor" stroke-width="1.7"/><path d="M13,4 C17,4.500 19.500,7 19.500,9.500" fill="none" stroke="currentColor" stroke-width="1.700"/><path d="M11,6 L11,21.500 L15,17.500 L22.500,17 Z" fill="currentColor" stroke="#535353" stroke-width="0.800"/></symbol>
<symbol id="i-anchor" viewBox="0 0 24 24"><path d="M5.500,21.500 V2.500 L19.500,17.500" fill="none" stroke="currentColor" stroke-width="1.800"/></symbol>
<symbol id="i-curv" viewBox="0 0 24 24"><path d="M3.500,4 C1.500,8 6,9.500 4.500,13 C3.500,16 2,19 5,20" fill="none" stroke="currentColor" stroke-width="1.600"/><path d="M5,20.500 L7.500,11 L14,6.500 L20,12 L15.500,18 Z" fill="currentColor"/><path d="M15,5 L19,1.500 L23.500,6.500 L20.500,10.500 Z" fill="currentColor"/><path d="M6,19.500 L12.500,13" stroke="#535353" stroke-width="1.200"/></symbol>
<symbol id="i-pen" viewBox="0 0 24 24"><path d="M3,21.500 L6,11 L13,6 L19,12 L14,19 Z" fill="currentColor"/><path d="M14,4.500 L17.500,1 L23,6.500 L19.500,10 Z" fill="currentColor"/><path d="M4,20.500 L11,13.500" stroke="#535353" stroke-width="1.300"/><circle cx="11.500" cy="13" r="1.600" fill="#535353"/></symbol>
<symbol id="i-penadd" viewBox="0 0 24 24"><path d="M6,22 L8.500,12.500 L14.500,8 L20,13.500 L15.500,19.500 Z" fill="currentColor"/><path d="M15.500,6.500 L18.500,3.500 L23.500,8.500 L20.500,11.500 Z" fill="currentColor"/><path d="M7,21 L13,15" stroke="#535353" stroke-width="1.200"/><path d="M4,2 V9 M0.500,5.500 H7.500" stroke="currentColor" stroke-width="2"/></symbol>
<symbol id="i-pendel" viewBox="0 0 24 24"><path d="M6,22 L8.500,12.500 L14.500,8 L20,13.500 L15.500,19.500 Z" fill="currentColor"/><path d="M15.500,6.500 L18.500,3.500 L23.500,8.500 L20.500,11.500 Z" fill="currentColor"/><path d="M7,21 L13,15" stroke="#535353" stroke-width="1.200"/><path d="M0.500,5.500 H7.500" stroke="currentColor" stroke-width="2"/></symbol>
<symbol id="i-type" viewBox="0 0 24 24"><path d="M3,3 H21 V8.500 H18.500 V6 H14 V19 H16.500 V21.500 H7.500 V19 H10 V6 H5.500 V8.500 H3 Z" fill="currentColor"/></symbol>
<symbol id="i-line" viewBox="0 0 24 24"><path d="M3,21.500 L21.500,2.500" stroke="currentColor" stroke-width="1.700"/></symbol>
<symbol id="i-arc" viewBox="0 0 24 24"><path d="M4,21.500 C4,11 10,4 20.500,3.500" fill="none" stroke="currentColor" stroke-width="1.700"/></symbol>
<symbol id="i-spiral" viewBox="0 0 24 24"><path d="M2,12 C2,4.500 8,1.500 13,2 C19,2.500 22.500,7.500 22,13 C21.500,18.500 17,22 12,21.500 C7.500,21 5,17.500 5.500,13.500 C6,9.500 9.500,7.500 12.500,8 C15.500,8.500 17.500,11 17,14 C16.500,16.500 14.500,17.500 12.500,17 C10.500,16.500 9.500,15 10,13.500 C10.500,12 12,11.500 13,12.500" fill="none" stroke="currentColor" stroke-width="1.500"/></symbol>
<symbol id="i-rgrid" viewBox="0 0 24 24"><path d="M2,4 H22 V20 H2 Z M2,9.300 H22 M2,14.600 H22 M8.700,4 V20 M15.400,4 V20" fill="none" stroke="currentColor" stroke-width="1.500"/></symbol>
<symbol id="i-pgrid" viewBox="0 0 24 24"><circle cx="12" cy="12" r="10" fill="none" stroke="currentColor" stroke-width="1.500"/><circle cx="12" cy="12" r="6" fill="none" stroke="currentColor" stroke-width="1.300"/><circle cx="12" cy="12" r="2.500" fill="none" stroke="currentColor" stroke-width="1.200"/><path d="M12,2 V22 M3.300,7 L20.700,17 M3.300,17 L20.700,7" stroke="currentColor" stroke-width="1.200"/></symbol>
<symbol id="i-rect" viewBox="0 0 24 24"><rect x="2" y="3.500" width="20" height="17" fill="#6c6c6c" stroke="currentColor" stroke-width="1.600"/></symbol>
<symbol id="i-brush" viewBox="0 0 24 24"><path d="M22.500,1 L9,13 L12,16 Z" fill="currentColor"/><path d="M8,14.500 L11,17.500 C10,22 5,22.500 2,21.500 C5,20 4,16 8,14.500 Z" fill="currentColor"/></symbol>
<symbol id="i-shaper" viewBox="0 0 24 24"><path d="M13.500,17 A8,7.500 0 1 1 17,8.500" fill="#6c6c6c" stroke="currentColor" stroke-width="1.700"/><path d="M22.500,4 L24.500,6.500 L12,20 L8.500,21.500 L9.500,17.500 Z" fill="currentColor" stroke="#535353" stroke-width="0.600"/></symbol>
<symbol id="i-eraser" viewBox="0 0 24 24"><path d="M13,2 L23,8 L14,21 L4,15 Z" fill="currentColor"/><path d="M5.500,14.500 L11,6.500 L19.500,11.500 L14,19.500 Z" fill="none" stroke="#535353" stroke-width="0"/><path d="M3.200,15.300 L7,9.700 L16,15 L12.500,20.600 Z" fill="#535353" stroke="currentColor" stroke-width="1.500"/></symbol>
<symbol id="i-rotate" viewBox="0 0 24 24"><path d="M7,5.500 C12,1.500 20,4 21,11 C21.500,14 20.500,16 19.500,17.500" fill="none" stroke="currentColor" stroke-width="1.800"/><path d="M2,7.500 L9.500,2 L9.500,10 Z" fill="currentColor"/><path d="M3.500,14 C4.500,19 9,21.500 13.500,21 C15.500,20.700 17.500,19.700 18.500,18.500" fill="none" stroke="currentColor" stroke-width="1.700" stroke-dasharray="1.600 2.200"/></symbol>
<symbol id="i-scale" viewBox="0 0 24 24"><rect x="2" y="11" width="11" height="11" fill="none" stroke="currentColor" stroke-width="1.700"/><path d="M8,15 V3 H22 V17 H14" fill="none" stroke="currentColor" stroke-width="1.700"/><path d="M13,12 L19,6 M14.500,5.500 H19.500 V10.500" fill="none" stroke="currentColor" stroke-width="1.500"/></symbol>
<symbol id="i-width" viewBox="0 0 24 24"><path d="M2,20 C6,20 7,13 10,12 C14,10.500 15,17 18,15.500 C21,14 20,10 22,9" fill="none" stroke="currentColor" stroke-width="2.600"/><path d="M6,2 C9,2 10,7 10,11 M5,3 C7,5 6,9 3,9" fill="none" stroke="currentColor" stroke-width="2"/><circle cx="10" cy="12" r="2.500" fill="#535353" stroke="currentColor" stroke-width="1.300"/><circle cx="3" cy="20" r="1.800" fill="currentColor"/><circle cx="15" cy="7" r="1.600" fill="currentColor"/></symbol>
<symbol id="i-ftrans" viewBox="0 0 24 24"><path d="M3,1 L3,17 L7.500,12.500 L14.500,12 Z" fill="currentColor"/><path d="M13,4.500 H24 M13,20 H24 M11.500,14 V20" stroke="currentColor" stroke-width="1.500"/><rect x="10" y="18.500" width="3" height="3" fill="currentColor"/><rect x="10.500" y="3" width="3" height="3" fill="currentColor"/></symbol>
<symbol id="i-sbuild" viewBox="0 0 24 24"><ellipse cx="9.500" cy="9" rx="8" ry="6.500" fill="none" stroke="currentColor" stroke-width="1.600"/><path d="M13,4 C18,3 21,7 19.500,11" fill="none" stroke="currentColor" stroke-width="1.600"/><path d="M4,9.500 H13" stroke="currentColor" stroke-width="1.400" stroke-dasharray="1.500 1.500"/><path d="M12,8 L12,22.500 L16,18.500 L22.500,18 Z" fill="currentColor" stroke="#535353" stroke-width="0.800"/></symbol>
<symbol id="i-persp" viewBox="0 0 24 24"><path d="M3,2 L22,8 V14 L3,19 Z M3,7.500 L22,10 M3,13 L22,12 M9,4 V17.500 M15.500,6 V15.800" fill="none" stroke="currentColor" stroke-width="1.400"/><path d="M6,19.500 H24 M9,22 H24 M14,16.800 H24" stroke="currentColor" stroke-width="1.300" opacity=".7"/></symbol>
<symbol id="i-mesh" viewBox="0 0 24 24"><rect x="2" y="2.500" width="20" height="18" fill="none" stroke="currentColor" stroke-width="1.600"/><path d="M2,10 C8,6 14,14 22,9 M2,16 C8,12 14,20 22,15 M9,2.500 C6,9 13,14 8,20.500 M16,2.500 C13,9 20,14 15,20.500" fill="none" stroke="currentColor" stroke-width="1.400"/></symbol>
<symbol id="i-grad" viewBox="0 0 24 24"><defs><linearGradient id="gg"><stop offset="0" stop-color="#3a3a3a"/><stop offset="1" stop-color="#cfcfcf"/></linearGradient></defs><rect x="1.500" y="3.500" width="21" height="17" fill="url(#gg)" stroke="currentColor" stroke-width="1.600"/></symbol>
<symbol id="i-eyedrop" viewBox="0 0 24 24"><path d="M3,22 C2,20 3.500,18 5,16.500 L13,8.500 L16.500,12 L8.500,20 C7,21.500 5,23 3,22 Z" fill="none" stroke="currentColor" stroke-width="1.600"/><path d="M12,6 L14,4 L15.500,5.500 L17.500,2.500 C19,1 21.500,1.500 22,3 C22.500,4.500 22,6 21,7 L18.500,9.500 L20,11 L18,13 Z" fill="currentColor"/></symbol>
<symbol id="i-blend" viewBox="0 0 24 24"><rect x="1" y="2" width="10" height="10" fill="currentColor"/><circle cx="13.500" cy="12" r="6" fill="#8d8d8d" stroke="currentColor" stroke-width="1.200"/><circle cx="19" cy="17" r="5.500" fill="#535353" stroke="currentColor" stroke-width="1.600"/></symbol>
<symbol id="i-spray" viewBox="0 0 24 24"><rect x="9.500" y="9" width="12" height="14" rx="1.500" fill="#2b2b2b" stroke="currentColor" stroke-width="1.600"/><rect x="12.500" y="4" width="6" height="5" fill="currentColor"/><circle cx="15.500" cy="16" r="3" fill="none" stroke="currentColor" stroke-width="1.600"/><path d="M2,4 h1.600 M6,4 h1.600 M10,4 h1.400 M2,7.500 h1.600 M6,7.500 h1.600 M2,11 h1.600 M6,11 h1.600 M2,14.500 h1.600" stroke="currentColor" stroke-width="1.600"/></symbol>
<symbol id="i-graph" viewBox="0 0 24 24"><path d="M2,1.500 V22 H23" fill="none" stroke="currentColor" stroke-width="1.600"/><rect x="5.500" y="12" width="4" height="9" fill="currentColor"/><rect x="11.500" y="3.500" width="4" height="17.500" fill="currentColor"/><rect x="17.500" y="8" width="4" height="13" fill="currentColor"/></symbol>
<symbol id="i-artb" viewBox="0 0 24 24"><path d="M7,1 V8 M0.500,7.500 H8" stroke="currentColor" stroke-width="1.600"/><path d="M7.500,8 H17 L22,13 V22 H7.500 Z" fill="#6c6c6c" stroke="currentColor" stroke-width="1.600"/></symbol>
<symbol id="i-slice" viewBox="0 0 24 24"><path d="M2.500,22 L12,9 L18,13 Z" fill="none" stroke="currentColor" stroke-width="1.600"/><path d="M13,8 L17,2.500 L22.500,6.500 L19,12 Z" fill="currentColor"/></symbol>
<symbol id="i-hand" viewBox="0 0 24 24"><path d="M6.500,13 V5.500 C6.500,3.500 9,3.500 9,5.500 V3.500 C9,1.500 11.800,1.500 11.800,3.500 V4.500 C11.800,2.500 14.500,2.500 14.500,4.500 V6 C14.500,4.200 17,4.200 17,6 V15 C17,19.500 15,22.500 11.500,22.500 C8,22.500 6.500,20.500 5,18 L1.500,12.500 C1,11 3,10 4.200,11.500 Z" fill="currentColor"/><path d="M9,5 V11 M11.800,4 V11 M14.500,5 V11" stroke="#535353" stroke-width="0.800"/></symbol>
<symbol id="i-zoom" viewBox="0 0 24 24"><circle cx="9.500" cy="9.500" r="7.300" fill="none" stroke="currentColor" stroke-width="1.800"/><path d="M15,15 L22.500,22.500" stroke="currentColor" stroke-width="2.600"/></symbol>
</defs></svg>
<div class="a" style="left:9px;top:453px;width:34px;height:27px;background:#2b2b2b;border-radius:3px"></div>
<svg style="left:16px;top:125px;color:#d2d2d2" width="24" height="24"><use href="#i-sel"/></svg>
<svg style="left:51px;top:125px;color:#d2d2d2" width="24" height="24"><use href="#i-dsel"/></svg>
<svg style="left:16px;top:155px;color:#d2d2d2" width="24" height="24"><use href="#i-wand"/></svg>
<svg style="left:51px;top:155px;color:#d2d2d2" width="24" height="24"><use href="#i-lasso"/></svg>
<svg style="left:16px;top:185px;color:#d2d2d2" width="24" height="24"><use href="#i-anchor"/></svg>
<svg style="left:51px;top:185px;color:#d2d2d2" width="24" height="24"><use href="#i-curv"/></svg>
<svg style="left:37px;top:206px" width="5" height="5"><path d="M5,0 V5 H0 Z" fill="#d2d2d2"/></svg>
<svg style="left:16px;top:215px;color:#d2d2d2" width="24" height="24"><use href="#i-type"/></svg>
<svg style="left:51px;top:215px;color:#d2d2d2" width="24" height="24"><use href="#i-line"/></svg>
<svg style="left:37px;top:236px" width="5" height="5"><path d="M5,0 V5 H0 Z" fill="#d2d2d2"/></svg>
<svg style="left:16px;top:245px;color:#d2d2d2" width="24" height="24"><use href="#i-rect"/></svg>
<svg style="left:51px;top:245px;color:#d2d2d2" width="24" height="24"><use href="#i-brush"/></svg>
<svg style="left:37px;top:266px" width="5" height="5"><path d="M5,0 V5 H0 Z" fill="#d2d2d2"/></svg>
<svg style="left:16px;top:275px;color:#d2d2d2" width="24" height="24"><use href="#i-shaper"/></svg>
<svg style="left:51px;top:275px;color:#d2d2d2" width="24" height="24"><use href="#i-eraser"/></svg>
<svg style="left:37px;top:296px" width="5" height="5"><path d="M5,0 V5 H0 Z" fill="#d2d2d2"/></svg>
<svg style="left:16px;top:305px;color:#d2d2d2" width="24" height="24"><use href="#i-rotate"/></svg>
<svg style="left:51px;top:305px;color:#d2d2d2" width="24" height="24"><use href="#i-scale"/></svg>
<svg style="left:37px;top:326px" width="5" height="5"><path d="M5,0 V5 H0 Z" fill="#d2d2d2"/></svg>
<svg style="left:16px;top:335px;color:#d2d2d2" width="24" height="24"><use href="#i-width"/></svg>
<svg style="left:51px;top:335px;color:#d2d2d2" width="24" height="24"><use href="#i-ftrans"/></svg>
<svg style="left:37px;top:356px" width="5" height="5"><path d="M5,0 V5 H0 Z" fill="#d2d2d2"/></svg>
<svg style="left:16px;top:365px;color:#d2d2d2" width="24" height="24"><use href="#i-sbuild"/></svg>
<svg style="left:51px;top:365px;color:#d2d2d2" width="24" height="24"><use href="#i-persp"/></svg>
<svg style="left:37px;top:386px" width="5" height="5"><path d="M5,0 V5 H0 Z" fill="#d2d2d2"/></svg>
<svg style="left:16px;top:395px;color:#d2d2d2" width="24" height="24"><use href="#i-mesh"/></svg>
<svg style="left:51px;top:395px;color:#d2d2d2" width="24" height="24"><use href="#i-grad"/></svg>
<svg style="left:16px;top:425px;color:#d2d2d2" width="24" height="24"><use href="#i-eyedrop"/></svg>
<svg style="left:51px;top:425px;color:#d2d2d2" width="24" height="24"><use href="#i-blend"/></svg>
<svg style="left:37px;top:446px" width="5" height="5"><path d="M5,0 V5 H0 Z" fill="#d2d2d2"/></svg>
<svg style="left:16px;top:455px;color:#d2d2d2" width="24" height="24"><use href="#i-spray"/></svg>
<svg style="left:51px;top:455px;color:#d2d2d2" width="24" height="24"><use href="#i-graph"/></svg>
<svg style="left:37px;top:476px" width="5" height="5"><path d="M5,0 V5 H0 Z" fill="#d2d2d2"/></svg>
<svg style="left:16px;top:485px;color:#d2d2d2" width="24" height="24"><use href="#i-artb"/></svg>
<svg style="left:51px;top:485px;color:#d2d2d2" width="24" height="24"><use href="#i-slice"/></svg>
<svg style="left:16px;top:515px;color:#d2d2d2" width="24" height="24"><use href="#i-hand"/></svg>
<svg style="left:51px;top:515px;color:#d2d2d2" width="24" height="24"><use href="#i-zoom"/></svg>
<svg style="left:37px;top:536px" width="5" height="5"><path d="M5,0 V5 H0 Z" fill="#d2d2d2"/></svg>
<svg style="left:30px;top:573px" width="46" height="44" viewBox="0 0 46 44"><rect width="46" height="44" fill="#fff"/><rect x="13" y="12" width="20" height="20" fill="#505050" stroke="#2c2c2c" stroke-width="1.500"/><path d="M0,44 L46,0" stroke="#e01b22" stroke-width="3"/></svg>
<div class="a" style="left:8px;top:550px;width:45px;height:45px;background:#f3f4f8;border:1px solid #2e2e2e;box-shadow:0 0 0 1px #6a6a6a"></div>
<svg style="left:62px;top:550px" width="14" height="16" viewBox="0 0 14 16"><path d="M1,5 L6,0.500 V3.500 Q12,3.500 12,10 V14 H9.500 V10 Q9.500,6.500 6,6.500 V9.500 Z" fill="#d2d2d2"/></svg>
<svg style="left:8px;top:602px" width="17" height="16" viewBox="0 0 17 16"><rect x="6" y="5" width="9.500" height="9.500" fill="#111" stroke="#e6e6e6" stroke-width="1.400"/><rect x="1" y="1" width="9.500" height="9.500" fill="#fff" stroke="#111" stroke-width="1.200"/></svg>
<div class="a" style="left:9px;top:627px;width:22px;height:23px;background:#3c3c3c;border-radius:2px"></div>
<div class="a" style="left:12px;top:630px;width:17px;height:17px;background:#f3f4f8;border:2px solid #0c0c0c"></div>
<div class="a" style="left:36px;top:630px;width:17px;height:17px;background:linear-gradient(90deg,#fff,#444);border:2px solid #0c0c0c"></div>
<svg style="left:61px;top:630px" width="15" height="17" viewBox="0 0 15 17"><rect x="1" y="1" width="15" height="15" fill="#fff" stroke="#0c0c0c" stroke-width="2"/><path d="M1,16 L15,3" stroke="#e01b22" stroke-width="2.600"/></svg>
<div class="a" style="left:9px;top:657px;width:22px;height:22px;background:#3c3c3c;border-radius:2px"></div>
<div class="a" style="left:32px;top:657px;width:24px;height:22px;border:1px solid #5c5c5c"></div>
<div class="a" style="left:57px;top:657px;width:24px;height:22px;border:1px solid #5c5c5c"></div>
<svg style="left:12px;top:660px" width="17" height="17" viewBox="0 0 17 17"><circle cx="6.500" cy="6.500" r="5.300" fill="#777" stroke="#d6d6d6" stroke-width="1.500"/><rect x="7.500" y="7.500" width="8.500" height="8.500" rx="1" fill="#d6d6d6"/></svg>
<svg style="left:36px;top:660px" width="17" height="17" viewBox="0 0 17 17"><rect x="7.500" y="7.500" width="8.500" height="8.500" rx="1" fill="#d6d6d6"/><circle cx="6.500" cy="6.500" r="5.300" fill="#5a5a5a" stroke="#d6d6d6" stroke-width="1.500"/></svg>
<svg style="left:62px;top:661px" width="14" height="14" viewBox="0 0 14 14"><circle cx="7" cy="7" r="5.500" fill="none" stroke="#7a7a7a" stroke-width="1.500"/><path d="M7,7 H12.500 V12.500 H7 Z" fill="#6a6a6a"/></svg>
<svg style="left:31px;top:690px" width="29" height="21" viewBox="0 0 29 21"><rect x="1" y="7" width="16" height="13" fill="#6e6e6e" stroke="#d2d2d2" stroke-width="1.500"/><rect x="11" y="1" width="17" height="14" fill="#6e6e6e" stroke="#d2d2d2" stroke-width="1.500"/><path d="M11,3.500 H28 M1,9.500 H11" stroke="#d2d2d2" stroke-width="1.500"/></svg>
<div class="a" style="left:7px;top:728px;width:70px;height:24px;background:#5e5e5e;border:1px solid #6b6b6b;border-radius:4px"></div>
<div class="a" style="left:36px;top:738px;width:5px;height:5px;border-radius:3px;background:#d6d6d6;box-shadow:6.500px 0 0 #d6d6d6,13px 0 0 #d6d6d6"></div>
<!-- ===== ALL TOOLS PANEL ===== -->
<div class="a" style="left:73px;top:81px;width:321px;height:945px;background:#535353;border:1px solid #626262;border-right-color:#4a4a4a;box-shadow:2px 2px 5px rgba(0,0,0,.55)"></div>
<svg style="left:373px;top:86px" width="15" height="11" viewBox="0 0 15 11"><path d="M0,1.200 H2.200 M4,1.200 H15 M0,5.500 H2.200 M4,5.500 H15 M0,9.800 H2.200 M4,9.800 H15" stroke="#d8d8d8" stroke-width="1.900"/></svg>
<div class="t" style="left:81px;top:105px;font-size:13.500px;font-weight:bold;color:#ececec;letter-spacing:0.200px;word-spacing:3px;letter-spacing:-1.953px">모든 도구</div>
<div class="a" style="left:80px;top:129px;width:306px;height:1px;background:#474747"></div>
<div class="a" style="left:80px;top:130px;width:306px;height:1px;background:#5a5a5a"></div>
<div class="a" style="left:371px;top:131px;width:16px;height:822px;background:#4f4f4f"></div>
<svg style="left:373px;top:134px" width="12" height="8" viewBox="0 0 12 8"><path d="M1.500,6.500 L6,2 L10.500,6.500" stroke="#d0d0d0" stroke-width="1.600" fill="none"/></svg>
<div class="a" style="left:373px;top:146px;width:12px;height:169px;background:#626262;border-radius:6px"></div>
<svg style="left:373px;top:941px" width="12" height="8" viewBox="0 0 12 8"><path d="M1.500,1.500 L6,6 L10.500,1.500" stroke="#d0d0d0" stroke-width="1.600" fill="none"/></svg>
<div class="t" style="left:81px;top:140px;font-size:13px;font-weight:bold;color:#e6e6e6;letter-spacing:-0.781px">선택:</div>
<div class="t" style="left:81px;top:478px;font-size:13px;font-weight:bold;color:#e6e6e6;letter-spacing:-0.836px">그리기:</div>
<div class="a" style="left:74px;top:131px;width:297px;height:822px;overflow:hidden">
<div class="a" style="left:6px;top:40px;width:287px;height:38px;border:1px solid #5f5f5f;border-radius:1px"></div>
<svg style="left:16px;top:47px;color:#8c8c8c" width="24" height="24"><use href="#i-sel"/></svg>
<div class="t" style="left:47px;top:52px;font-size:14px;color:#838383;letter-spacing:0.300px;word-spacing:3px;letter-spacing:-1.898px">선택 도구</div>
<div class="t" style="right:21px;top:53px;font-size:13px;color:#7e7e7e">V</div>
<div class="a" style="left:6px;top:90px;width:287px;height:75px;border:1px solid #5f5f5f;border-radius:1px"></div>
<svg style="left:16px;top:97px;color:#8c8c8c" width="24" height="24"><use href="#i-dsel"/></svg>
<div class="t" style="left:47px;top:102px;font-size:14px;color:#838383;letter-spacing:0.300px;word-spacing:3px;letter-spacing:-1.81px">직접 선택 도구</div>
<div class="t" style="right:21px;top:103px;font-size:13px;color:#7e7e7e">A</div>
<div class="a" style="left:7px;top:127px;width:285px;height:1px;background:#5f5f5f"></div>
<svg style="left:16px;top:134px;color:#8c8c8c" width="24" height="24"><use href="#i-gsel"/></svg>
<div class="t" style="left:47px;top:139px;font-size:14px;color:#838383;letter-spacing:0.300px;word-spacing:3px;letter-spacing:-1.81px">그룹 선택 도구</div>
<div class="a" style="left:6px;top:177px;width:287px;height:38px;border:1px solid #5f5f5f;border-radius:1px"></div>
<svg style="left:16px;top:184px;color:#8c8c8c" width="24" height="24"><use href="#i-wand"/></svg>
<div class="t" style="left:47px;top:189px;font-size:14px;color:#838383;letter-spacing:0.300px;word-spacing:3px;letter-spacing:-1.848px">자동 선택 도구</div>
<div class="t" style="right:21px;top:190px;font-size:13px;color:#7e7e7e">Y</div>
<div class="a" style="left:6px;top:227px;width:287px;height:38px;border:1px solid #5f5f5f;border-radius:1px"></div>
<svg style="left:16px;top:234px;color:#8c8c8c" width="24" height="24"><use href="#i-lasso"/></svg>
<div class="t" style="left:47px;top:239px;font-size:14px;color:#838383;letter-spacing:0.300px;word-spacing:3px;letter-spacing:-1.782px">올가미 도구</div>
<div class="t" style="right:21px;top:240px;font-size:13px;color:#7e7e7e">Q</div>
<div class="a" style="left:6px;top:277px;width:287px;height:38px;border:1px solid #5f5f5f;border-radius:1px"></div>
<svg style="left:16px;top:284px;color:#8c8c8c" width="24" height="24"><use href="#i-artb"/></svg>
<div class="t" style="left:47px;top:289px;font-size:14px;color:#838383;letter-spacing:0.300px;word-spacing:3px;letter-spacing:-1.898px">대지 도구</div>
<div class="t" style="right:21px;top:290px;font-size:13px;color:#7e7e7e;letter-spacing:0.183px">Shift+O</div>
<div class="a" style="left:6px;top:377px;width:287px;height:149px;border:1px solid #5f5f5f;border-radius:1px"></div>
<svg style="left:16px;top:384px;color:#8c8c8c" width="24" height="24"><use href="#i-pen"/></svg>
<div class="t" style="left:47px;top:389px;font-size:14px;color:#838383;letter-spacing:0.300px;word-spacing:3px;letter-spacing:-1.848px">펜 도구</div>
<div class="t" style="right:21px;top:390px;font-size:13px;color:#7e7e7e">P</div>
<div class="a" style="left:7px;top:414px;width:285px;height:1px;background:#5f5f5f"></div>
<svg style="left:16px;top:421px;color:#8c8c8c" width="24" height="24"><use href="#i-penadd"/></svg>
<div class="t" style="left:47px;top:426px;font-size:14px;color:#838383;letter-spacing:0.300px;word-spacing:3px;letter-spacing:-1.865px">고정점 추가 도구</div>
<div class="t" style="right:21px;top:427px;font-size:13px;color:#7e7e7e">+</div>
<div class="a" style="left:7px;top:451px;width:285px;height:1px;background:#5f5f5f"></div>
<svg style="left:16px;top:458px;color:#8c8c8c" width="24" height="24"><use href="#i-pendel"/></svg>
<div class="t" style="left:47px;top:463px;font-size:14px;color:#838383;letter-spacing:0.300px;word-spacing:3px;letter-spacing:-1.865px">고정점 삭제 도구</div>
<div class="t" style="right:21px;top:464px;font-size:13px;color:#7e7e7e">-</div>
<div class="a" style="left:7px;top:488px;width:285px;height:1px;background:#5f5f5f"></div>
<svg style="left:16px;top:495px;color:#8c8c8c" width="24" height="24"><use href="#i-anchor"/></svg>
<div class="t" style="left:47px;top:500px;font-size:14px;color:#838383;letter-spacing:0.300px;word-spacing:3px;letter-spacing:-1.965px">고정점 도구</div>
<div class="t" style="right:21px;top:501px;font-size:13px;color:#7e7e7e;letter-spacing:0.143px">Shift+C</div>
<div class="a" style="left:6px;top:539px;width:287px;height:38px;border:1px solid #5f5f5f;border-radius:1px"></div>
<svg style="left:16px;top:546px;color:#8c8c8c" width="24" height="24"><use href="#i-curv"/></svg>
<div class="t" style="left:47px;top:551px;font-size:14px;color:#838383;letter-spacing:0.300px;word-spacing:3px;letter-spacing:-1.918px">곡률 도구</div>
<div class="t" style="right:21px;top:552px;font-size:13px;color:#7e7e7e;letter-spacing:0.114px">Shift+~</div>
<div class="a" style="left:6px;top:589px;width:287px;height:186px;border:1px solid #5f5f5f;border-radius:1px"></div>
<svg style="left:16px;top:596px;color:#8c8c8c" width="24" height="24"><use href="#i-line"/></svg>
<div class="t" style="left:47px;top:601px;font-size:14px;color:#838383;letter-spacing:0.300px;word-spacing:3px;letter-spacing:-1.918px">선분 도구</div>
<div class="t" style="right:21px;top:602px;font-size:13px;color:#7e7e7e">₩</div>
<div class="a" style="left:7px;top:626px;width:285px;height:1px;background:#5f5f5f"></div>
<svg style="left:16px;top:633px;color:#8c8c8c" width="24" height="24"><use href="#i-arc"/></svg>
<div class="t" style="left:47px;top:638px;font-size:14px;color:#838383;letter-spacing:0.300px;word-spacing:3px;letter-spacing:-1.873px">호 도구</div>
<div class="a" style="left:7px;top:663px;width:285px;height:1px;background:#5f5f5f"></div>
<svg style="left:16px;top:670px;color:#8c8c8c" width="24" height="24"><use href="#i-spiral"/></svg>
<div class="t" style="left:47px;top:675px;font-size:14px;color:#838383;letter-spacing:0.300px;word-spacing:3px;letter-spacing:-1.965px">나선형 도구</div>
<div class="a" style="left:7px;top:700px;width:285px;height:1px;background:#5f5f5f"></div>
<svg style="left:16px;top:707px;color:#8c8c8c" width="24" height="24"><use href="#i-rgrid"/></svg>
<div class="t" style="left:47px;top:712px;font-size:14px;color:#838383;letter-spacing:0.300px;word-spacing:3px;letter-spacing:-1.865px">사각형 격자 도구</div>
<div class="a" style="left:7px;top:737px;width:285px;height:1px;background:#5f5f5f"></div>
<svg style="left:16px;top:744px;color:#8c8c8c" width="24" height="24"><use href="#i-pgrid"/></svg>
<div class="t" style="left:47px;top:749px;font-size:14px;color:#838383;letter-spacing:0.300px;word-spacing:3px;letter-spacing:-1.865px">극좌표 격자 도구</div>
<div class="a" style="left:6px;top:789px;width:287px;height:38px;border:1px solid #5f5f5f;border-radius:1px"></div>
<svg style="left:16px;top:796px;color:#8c8c8c" width="24" height="24"><use href="#i-rect"/></svg>
<div class="t" style="left:47px;top:801px;font-size:14px;color:#838383;letter-spacing:0.300px;word-spacing:3px;letter-spacing:-1.965px">사각형 도구</div>
<div class="t" style="right:21px;top:802px;font-size:13px;color:#7e7e7e">M</div>
</div>
<div class="t" style="left:139px;top:983px;font-size:13.500px;color:#e0e0e0;word-spacing:3px;letter-spacing:-1.629px">보기 :</div>
<div class="a" style="left:180px;top:976px;width:29px;height:29px;background:#2d2d2d;border-radius:3px"></div>
<div class="a" style="left:218px;top:976px;width:29px;height:29px;background:#2d2d2d;border-radius:3px"></div>
<div class="a" style="left:257px;top:976px;width:29px;height:29px;background:#2d2d2d;border-radius:3px"></div>
<div class="a" style="left:296px;top:976px;width:29px;height:29px;background:#2d2d2d;border-radius:3px"></div>
<svg style="left:184px;top:980px" width="21" height="21" viewBox="0 0 21 21"><rect x="8" y="8" width="11" height="11" fill="#111" stroke="#fff" stroke-width="1.800"/><rect x="1.500" y="1.500" width="12" height="12" fill="#fff" stroke="#111" stroke-width="1.400"/></svg>
<div class="a" style="left:223px;top:981px;width:19px;height:19px;background:linear-gradient(90deg,#3a3a3a,#e0e0e0);border:1.500px solid #e6e6e6"></div>
<svg style="left:261px;top:980px" width="21" height="21" viewBox="0 0 21 21"><circle cx="8.500" cy="8.500" r="6.800" fill="#777" stroke="#e6e6e6" stroke-width="1.600"/><rect x="9" y="9" width="11" height="11" rx="1" fill="#f0f0f0"/></svg>
<svg style="left:300px;top:982px" width="22" height="17" viewBox="0 0 22 17"><rect x="1" y="5" width="13" height="11" fill="#777" stroke="#e6e6e6" stroke-width="1.500"/><rect x="8" y="1" width="13" height="11" fill="#777" stroke="#e6e6e6" stroke-width="1.500"/><path d="M8,3.300 H21" stroke="#e6e6e6" stroke-width="1.600"/></svg>
<!-- ===== RIGHT DOCK ===== -->
<div class="a" style="left:1356px;top:82px;width:6px;height:872px;background:linear-gradient(90deg,rgba(0,0,0,0),rgba(0,0,0,.22))"></div>
<div class="a" style="left:1361px;top:76px;width:559px;height:879px;background:#3b3b3b;border-radius:4px 0 0 0"></div>
<div class="a" style="left:1670px;top:955px;width:250px;height:75px;background:#3b3b3b"></div>
<div class="a" style="left:1362px;top:77px;width:558px;height:15px;background:#444;border-radius:3px 0 0 0"></div>
<svg style="left:1654px;top:81px" width="10" height="8" viewBox="0 0 10 8"><path d="M4,0.8 L1,4 L4,7.2 Z M9,0.8 L6,4 L9,7.2 Z" fill="#d8d8d8"/></svg>
<div class="a" style="left:1362px;top:92px;width:307px;height:862px;background:#535353"></div>
<div class="a" style="left:1361px;top:955px;width:309px;height:55px;background:#616161"></div>
<div class="a" style="left:1361px;top:1010px;width:309px;height:18px;background:#4a4a4a"></div>
<div class="a" style="left:1362px;top:92px;width:307px;height:34px;background:#424242"></div>
<div class="a" style="left:1362px;top:92px;width:53px;height:34px;background:#4a4a4a;"></div>
<div class="t" style="left:1375.5px;top:100px;font-size:16px;color:#9c9c9c;letter-spacing:-2.25px">색상</div>
<div class="a" style="left:1416px;top:92px;width:94px;height:34px;background:#535353;"></div>
<div class="t" style="left:1436px;top:100px;font-size:16px;color:#ececec;word-spacing:3px;letter-spacing:-1.451px">색상 안내</div>
<svg style="left:1422px;top:103px" width="7" height="12" viewBox="0 0 7 12"><path d="M1,4.500 L3.500,1.500 L6,4.500 M1,7.500 L3.500,10.500 L6,7.500" stroke="#c8c8c8" stroke-width="1.200" fill="none"/></svg>
<svg style="left:1648px;top:105px" width="13" height="10" viewBox="0 0 13 10"><path d="M0,1 H13 M0,5 H13 M0,9 H13" stroke="#c4c4c4" stroke-width="1.7"/></svg>
<div class="a" style="left:1368px;top:136px;width:27px;height:27px;background:#f3f4f8;border:2px solid #fff;outline:1px solid #111;outline-offset:-4px;box-shadow:0 0 0 1px #111"></div>
<div class="a" style="left:1401px;top:135px;width:261px;height:31px;background:#4a4a4a;border:1px solid #646464;border-radius:2px"></div>
<div class="a" style="left:1638px;top:136px;width:1px;height:29px;background:#646464"></div>
<svg style="left:1644px;top:146px" width="12" height="8" viewBox="0 0 11 8"><path d="M1.2,1.2 L5.500,5.600 L9.800,1.200" stroke="#f0f0f0" stroke-width="1.700" fill="none"/></svg>
<div class="a" style="left:1406px;top:141px;width:20px;height:20px;background:#f3f4f8"></div>
<div class="a" style="left:1426px;top:141px;width:20px;height:20px;background:#96a3b6"></div>
<div class="a" style="left:1446px;top:141px;width:20px;height:20px;background:#b098a6"></div>
<div class="a" style="left:1466px;top:141px;width:20px;height:20px;background:#fddfc0"></div>
<div class="a" style="left:1486px;top:141px;width:20px;height:20px;background:#9eb189"></div>
<div class="a" style="left:1406px;top:141px;width:20px;height:20px;border:1px solid #fff;outline:1px solid #111;outline-offset:-2px"></div>
<div class="t" style="left:1406px;top:177px;font-size:13.500px;font-weight:bold;color:#dcdcdc;letter-spacing:0.500px;letter-spacing:-1.5px">음영</div>
<svg style="left:1504px;top:183px" width="7" height="5"><path d="M0,0 H7 L3.500,5 Z" fill="#c8c8c8"/></svg>
<div class="t" style="left:1598.500px;top:177px;font-size:13.500px;font-weight:bold;color:#dcdcdc;letter-spacing:0.500px;letter-spacing:-1.9px">농도</div>
<div class="a" style="left:1368px;top:200px;width:294px;height:91px;background:#4a4a4a;border:1px solid #5c5c5c"></div>
<div class="a" style="left:1369.5px;top:201.7px;width:29.500px;height:17.4px;background:#261d1c"></div>
<div class="a" style="left:1400.3px;top:201.7px;width:29.500px;height:17.4px;background:#5f5f5f"></div>
<div class="a" style="left:1431.2px;top:201.7px;width:29.500px;height:17.4px;background:#a2a2a3"></div>
<div class="a" style="left:1462.0px;top:201.7px;width:29.500px;height:17.4px;background:#d2d2d6"></div>
<div class="a" style="left:1492.9px;top:201.7px;width:29.500px;height:17.4px;background:#f3f4f8"></div>
<div class="a" style="left:1523.8px;top:201.7px;width:29.500px;height:17.4px;background:#f5f6f9"></div>
<div class="a" style="left:1554.6px;top:201.7px;width:29.500px;height:17.4px;background:#f8f8fa"></div>
<div class="a" style="left:1585.5px;top:201.7px;width:29.500px;height:17.4px;background:#fafafc"></div>
<div class="a" style="left:1616.3px;top:201.7px;width:29.500px;height:17.4px;background:#fdfdfd"></div>
<div class="a" style="left:1369.5px;top:220.5px;width:29.500px;height:17.4px;background:#000"></div>
<div class="a" style="left:1400.3px;top:220.5px;width:29.500px;height:17.4px;background:#24262b"></div>
<div class="a" style="left:1431.2px;top:220.5px;width:29.500px;height:17.4px;background:#4b505a"></div>
<div class="a" style="left:1462.0px;top:220.5px;width:29.500px;height:17.4px;background:#737a88"></div>
<div class="a" style="left:1492.9px;top:220.5px;width:29.500px;height:17.4px;background:#98a4b5"></div>
<div class="a" style="left:1523.8px;top:220.5px;width:29.500px;height:17.4px;background:#a9b3c2"></div>
<div class="a" style="left:1554.6px;top:220.5px;width:29.500px;height:17.4px;background:#c1c7d2"></div>
<div class="a" style="left:1585.5px;top:220.5px;width:29.500px;height:17.4px;background:#d7dbe2"></div>
<div class="a" style="left:1616.3px;top:220.5px;width:29.500px;height:17.4px;background:#eaecef"></div>
<div class="a" style="left:1369.5px;top:239.2px;width:29.500px;height:17.4px;background:#000"></div>
<div class="a" style="left:1400.3px;top:239.2px;width:29.500px;height:17.4px;background:#2b2527"></div>
<div class="a" style="left:1431.2px;top:239.2px;width:29.500px;height:17.4px;background:#574b51"></div>
<div class="a" style="left:1462.0px;top:239.2px;width:29.500px;height:17.4px;background:#85747e"></div>
<div class="a" style="left:1492.9px;top:239.2px;width:29.500px;height:17.4px;background:#b09aa7"></div>
<div class="a" style="left:1523.8px;top:239.2px;width:29.500px;height:17.4px;background:#bfacb7"></div>
<div class="a" style="left:1554.6px;top:239.2px;width:29.500px;height:17.4px;background:#cfc2c9"></div>
<div class="a" style="left:1585.5px;top:239.2px;width:29.500px;height:17.4px;background:#e0d6db"></div>
<div class="a" style="left:1616.3px;top:239.2px;width:29.500px;height:17.4px;background:#efebed"></div>
<div class="a" style="left:1369.5px;top:258.0px;width:29.500px;height:17.4px;background:#000"></div>
<div class="a" style="left:1400.3px;top:258.0px;width:29.500px;height:17.4px;background:#3d342c"></div>
<div class="a" style="left:1431.2px;top:258.0px;width:29.500px;height:17.4px;background:#7d6d5d"></div>
<div class="a" style="left:1462.0px;top:258.0px;width:29.500px;height:17.4px;background:#bfab93"></div>
<div class="a" style="left:1492.9px;top:258.0px;width:29.500px;height:17.4px;background:#fde0c0"></div>
<div class="a" style="left:1523.8px;top:258.0px;width:29.500px;height:17.4px;background:#fde6cd"></div>
<div class="a" style="left:1554.6px;top:258.0px;width:29.500px;height:17.4px;background:#feecda"></div>
<div class="a" style="left:1585.5px;top:258.0px;width:29.500px;height:17.4px;background:#fef3e6"></div>
<div class="a" style="left:1616.3px;top:258.0px;width:29.500px;height:17.4px;background:#fff9f3"></div>
<div class="a" style="left:1369.5px;top:276.5px;width:29.500px;height:13.5px;background:#000"></div>
<div class="a" style="left:1400.3px;top:276.5px;width:29.500px;height:13.5px;background:#292e25"></div>
<div class="a" style="left:1431.2px;top:276.5px;width:29.500px;height:13.5px;background:#4f5a47"></div>
<div class="a" style="left:1462.0px;top:276.5px;width:29.500px;height:13.5px;background:#798a6b"></div>
<div class="a" style="left:1492.9px;top:276.5px;width:29.500px;height:13.5px;background:#a0b38b"></div>
<div class="a" style="left:1523.8px;top:276.5px;width:29.500px;height:13.5px;background:#b5c4a4"></div>
<div class="a" style="left:1554.6px;top:276.5px;width:29.500px;height:13.5px;background:#c8d3bc"></div>
<div class="a" style="left:1585.5px;top:276.5px;width:29.500px;height:13.5px;background:#dbe2d2"></div>
<div class="a" style="left:1616.3px;top:276.5px;width:29.500px;height:13.5px;background:#edf0e8"></div>
<svg style="left:1648.5px;top:204.5px" width="11" height="8" viewBox="0 0 11 8"><path d="M1.2,6.500 L5.500,2 L9.800,6.500" stroke="#b8b8b8" stroke-width="1.700" fill="none"/></svg>
<svg style="left:1648.5px;top:279.5px" width="11" height="8" viewBox="0 0 11 8"><path d="M1.2,1.2 L5.500,5.600 L9.800,1.200" stroke="#b8b8b8" stroke-width="1.700" fill="none"/></svg>
<div class="a" style="left:1648px;top:216px;width:12px;height:58px;background:#5e5e5e;border-radius:6px"></div>
<svg style="left:1376px;top:299px" width="22" height="12" viewBox="0 0 22 12"><rect x="0.700" y="0.700" width="16" height="9.600" fill="#8a8a8a" stroke="#cfcfcf" stroke-width="1.400"/><path d="M6,0.700 V10.300 M11.300,0.700 V10.300 M0.700,5.500 H16.700" stroke="#cfcfcf" stroke-width="1.200"/><path d="M18.500,9 h3 l-1.500,2.200z" fill="#cfcfcf"/></svg>
<div class="t" style="left:1410px;top:297px;font-size:13.500px;font-weight:bold;color:#dcdcdc;letter-spacing:-2.5px">없음</div>
<svg style="left:1586px;top:296px" width="16" height="16" viewBox="0 0 16 16"><circle cx="8" cy="8" r="7" fill="#9a9a9a" stroke="#d6d6d6" stroke-width="1.500"/><path d="M8,1 V15 M1,8 H15 M3,3 L13,13 M13,3 L3,13" stroke="#d6d6d6" stroke-width="0.900"/><circle cx="8" cy="8" r="2.200" fill="#535353"/></svg>
<svg style="left:1617px;top:297px" width="22" height="15" viewBox="0 0 22 15"><path d="M7,1 H20.500 V10.500 H9" fill="#8a8a8a" stroke="#d6d6d6" stroke-width="1.400"/><path d="M12.500,1 V10.500 M16.500,1 V10.500" stroke="#d6d6d6" stroke-width="1.200"/><path d="M4,6 V14 M0,10 H8" stroke="#e6e6e6" stroke-width="2.200"/></svg>
<div class="a" style="left:1362px;top:316px;width:307px;height:3px;background:#3b3b3b"></div>
<div class="a" style="left:1362px;top:319px;width:307px;height:33px;background:#424242"></div>
<div class="a" style="left:1362px;top:319px;width:53px;height:33px;background:#535353;"></div>
<div class="t" style="left:1375.5px;top:326px;font-size:16px;color:#ececec;letter-spacing:-1.9px">심볼</div>
<div class="a" style="left:1415px;top:319px;width:52px;height:33px;background:#4a4a4a;"></div>
<div class="t" style="left:1427px;top:326px;font-size:16px;color:#9c9c9c;letter-spacing:-1.75px">견본</div>
<svg style="left:1648px;top:332px" width="13" height="10" viewBox="0 0 13 10"><path d="M0,1 H13 M0,5 H13 M0,9 H13" stroke="#c4c4c4" stroke-width="1.7"/></svg>
<div class="a" style="left:1368px;top:360px;width:294px;height:109px;background:#4a4a4a;border:1px solid #5e5e5e;overflow:hidden" id="symgrid">
<svg style="left:1.2px;top:1.1px" width="39" height="39" viewBox="0 0 39 39"><rect width="39" height="39" fill="#e9e9e9"/><rect x="3" y="14" width="34" height="11" rx="2" fill="#fff" stroke="#1da7e0" stroke-width="1.200"/><rect x="4" y="20" width="32" height="4" fill="#e2e6ea"/></svg>
<svg style="left:42.3px;top:1.1px" width="39" height="39" viewBox="0 0 39 39"><rect width="39" height="39" fill="#e9e9e9"/><rect x="3" y="13" width="34" height="13" rx="2" fill="#dcdcdc" stroke="#1da7e0" stroke-width="1"/><rect x="4" y="20" width="32" height="5" fill="#c6c6c6"/></svg>
<svg style="left:83.4px;top:1.1px" width="39" height="39" viewBox="0 0 39 39"><rect width="39" height="39" fill="#e9e9e9"/><rect x="3" y="9" width="34" height="21" fill="#ececec" stroke="#a9d5ea" stroke-width="1"/></svg>
<svg style="left:124.5px;top:1.1px" width="39" height="39" viewBox="0 0 39 39"><rect width="39" height="39" fill="#e9e9e9"/><rect x="3.500" y="15" width="33" height="9" rx="1.500" fill="#e0e0e0" stroke="#1da7e0" stroke-width="1"/><rect x="30" y="16" width="6" height="7" fill="#f4f4f4" stroke="#888" stroke-width="0.500"/><path d="M31.500,18.500 h3 l-1.500,2z" fill="#222"/></svg>
<svg style="left:165.6px;top:1.1px" width="39" height="39" viewBox="0 0 39 39"><rect width="39" height="39" fill="#e9e9e9"/><rect x="3.500" y="4.500" width="32" height="30" rx="4" fill="#f2f2f2" stroke="#1e7fc2" stroke-width="1.600"/><path d="M13,17 H26.500 L19.700,25 Z" fill="#1a1a1a"/></svg>
<svg style="left:206.7px;top:1.1px" width="39" height="39" viewBox="0 0 39 39"><rect width="39" height="39" fill="#e9e9e9"/><rect x="3.500" y="4.500" width="32" height="30" rx="4" fill="#f2f2f2" stroke="#1e7fc2" stroke-width="1.600"/><path d="M12,12.500 L27,27 M27,12.500 L12,27" stroke="#1a1a1a" stroke-width="4"/></svg>
<svg style="left:1.2px;top:41.8px" width="39" height="39" viewBox="0 0 39 39"><rect width="39" height="39" fill="#e9e9e9"/><rect x="5" y="6" width="32" height="30" fill="#9a9a9a"/><rect x="3" y="4" width="32" height="30" fill="#1da7e0"/><rect x="3" y="4" width="32" height="6" fill="#1578b8"/><rect x="6.5" y="13" width="4" height="4" fill="#fff"/><rect x="6.5" y="19.2" width="4" height="4" fill="#fff"/><rect x="6.5" y="25.4" width="4" height="4" fill="#fff"/><rect x="12.7" y="13" width="4" height="4" fill="#fff"/><rect x="12.7" y="19.2" width="4" height="4" fill="#fff"/><rect x="12.7" y="25.4" width="4" height="4" fill="#fff"/><rect x="18.9" y="13" width="4" height="4" fill="#fff"/><rect x="18.9" y="19.2" width="4" height="4" fill="#fff"/><rect x="18.9" y="25.4" width="4" height="4" fill="#fff"/><rect x="25.1" y="13" width="4" height="4" fill="#fff"/><rect x="25.1" y="19.2" width="4" height="4" fill="#fff"/><rect x="25.1" y="25.4" width="4" height="4" fill="#fff"/><rect x="31.3" y="13" width="4" height="4" fill="#fff"/><rect x="31.3" y="19.2" width="4" height="4" fill="#fff"/><rect x="31.3" y="25.4" width="4" height="4" fill="#fff"/><rect x="12" y="18.500" width="6" height="6" rx="1" fill="#e8452c"/></svg>
<svg style="left:42.3px;top:41.8px" width="39" height="39" viewBox="0 0 39 39"><rect width="39" height="39" fill="#e9e9e9"/><rect x="3" y="4" width="33" height="30.500" fill="#1da7e0"/><rect x="5" y="8.500" width="29" height="21.500" fill="#e9e9e9"/><rect x="5" y="5" width="2" height="2.500" fill="#e9e9e9"/><rect x="5" y="31" width="2" height="2.500" fill="#e9e9e9"/><rect x="8.6" y="5" width="2" height="2.500" fill="#e9e9e9"/><rect x="8.6" y="31" width="2" height="2.500" fill="#e9e9e9"/><rect x="12.2" y="5" width="2" height="2.500" fill="#e9e9e9"/><rect x="12.2" y="31" width="2" height="2.500" fill="#e9e9e9"/><rect x="15.8" y="5" width="2" height="2.500" fill="#e9e9e9"/><rect x="15.8" y="31" width="2" height="2.500" fill="#e9e9e9"/><rect x="19.4" y="5" width="2" height="2.500" fill="#e9e9e9"/><rect x="19.4" y="31" width="2" height="2.500" fill="#e9e9e9"/><rect x="23" y="5" width="2" height="2.500" fill="#e9e9e9"/><rect x="23" y="31" width="2" height="2.500" fill="#e9e9e9"/><rect x="26.6" y="5" width="2" height="2.500" fill="#e9e9e9"/><rect x="26.6" y="31" width="2" height="2.500" fill="#e9e9e9"/><rect x="30.2" y="5" width="2" height="2.500" fill="#e9e9e9"/><rect x="30.2" y="31" width="2" height="2.500" fill="#e9e9e9"/><rect x="33.8" y="5" width="2" height="2.500" fill="#e9e9e9"/><rect x="33.8" y="31" width="2" height="2.500" fill="#e9e9e9"/></svg>
<svg style="left:83.4px;top:41.8px" width="39" height="39" viewBox="0 0 39 39"><rect width="39" height="39" fill="#e9e9e9"/><circle cx="7.500" cy="30" r="4.500" fill="#1da7e0"/><path d="M3,17 A19,19 0 0 1 22,36" fill="none" stroke="#1da7e0" stroke-width="5.500"/><path d="M3,6 A30,30 0 0 1 33,36" fill="none" stroke="#1da7e0" stroke-width="5.500"/></svg>
<svg style="left:124.5px;top:41.8px" width="39" height="39" viewBox="0 0 39 39"><rect width="39" height="39" fill="#e9e9e9"/><circle cx="23.500" cy="14.500" r="10" fill="none" stroke="#1da7e0" stroke-width="3.600"/><path d="M15.500,22.500 L6,32" stroke="#1da7e0" stroke-width="6" stroke-linecap="round"/></svg>
<svg style="left:165.6px;top:41.8px" width="39" height="39" viewBox="0 0 39 39"><rect width="39" height="39" fill="#e9e9e9"/><rect x="3.500" y="9" width="32" height="21" rx="3" fill="#e9e9e9" stroke="#1da7e0" stroke-width="2"/><rect x="3.500" y="14" width="32" height="5.500" fill="#1da7e0"/></svg>
<svg style="left:206.7px;top:41.8px" width="39" height="39" viewBox="0 0 39 39"><rect width="39" height="39" fill="#e9e9e9"/><path d="M3,5 H9 L13,24 H31 L34,11 H11" fill="none" stroke="#1da7e0" stroke-width="2.600"/><path d="M16,11 V23 M21,11 V23 M26,11 V23 M30.500,11 V23" stroke="#1da7e0" stroke-width="2.400"/><circle cx="15" cy="31" r="3.200" fill="#1da7e0"/><circle cx="29" cy="31" r="3.200" fill="#1da7e0"/></svg>
<svg style="left:1.2px;top:83.0px" width="39" height="39" viewBox="0 0 39 39"><rect width="39" height="39" fill="#e9e9e9"/><path d="M3,22 L19.500,7 L36,22 M9,19 V36 M30,19 V36 M27,7 V14" fill="none" stroke="#1da7e0" stroke-width="4.500"/></svg>
<svg style="left:42.3px;top:83.0px" width="39" height="39" viewBox="0 0 39 39"><rect width="39" height="39" fill="#e9e9e9"/><path d="M19.500,14 C15,3 3,7 6,18 C8,24 15,27 19.500,33 C24,27 31,24 33,18 C36,7 24,3 19.500,14 Z" fill="#e9e9e9" stroke="#1da7e0" stroke-width="3.600"/><rect x="25" y="19" width="7" height="5" fill="#e2001a"/></svg>
<svg style="left:83.4px;top:83.0px" width="39" height="39" viewBox="0 0 39 39"><rect width="39" height="39" fill="#e9e9e9"/><path d="M10,16 V5 H24 L30,11 V16" fill="#e9e9e9" stroke="#1da7e0" stroke-width="3"/><path d="M3,26 L6,16 H33 L36,26 Z" fill="#1da7e0"/><path d="M24,5 V11 H30" fill="none" stroke="#1da7e0" stroke-width="2"/></svg>
</div>
<div class="a" style="left:1646px;top:361px;width:15px;height:107px;background:#4a4a4a"></div>
<svg style="left:1648.5px;top:364.5px" width="11" height="8" viewBox="0 0 11 8"><path d="M1.2,6.500 L5.500,2 L9.800,6.500" stroke="#b8b8b8" stroke-width="1.700" fill="none"/></svg>
<svg style="left:1648.5px;top:455.5px" width="11" height="8" viewBox="0 0 11 8"><path d="M1.2,1.2 L5.500,5.600 L9.800,1.200" stroke="#b8b8b8" stroke-width="1.700" fill="none"/></svg>
<div class="a" style="left:1648px;top:376px;width:12px;height:64px;background:#5e5e5e;border-radius:6px"></div>
<svg style="left:1376px;top:473px" width="20" height="16" viewBox="0 0 20 16"><path d="M1.500,1 V14 M5,1 V14 M8.500,3 V14" stroke="#d6d6d6" stroke-width="2.200"/><path d="M10.500,3.500 L15,14" stroke="#d6d6d6" stroke-width="2.200"/><path d="M16.500,12.500 h3.200 l-1.600,2.400z" fill="#d6d6d6"/></svg>
<svg style="left:1484px;top:474px" width="14" height="14" viewBox="0 0 14 14"><path d="M2,1 V8 H9" fill="none" stroke="#6e6e6e" stroke-width="2.200"/><path d="M8,3.500 L13,8 L8,12.500 Z" fill="#6e6e6e"/></svg>
<svg style="left:1515px;top:473px" width="19" height="16" viewBox="0 0 19 16"><path d="M7,5 H4.500 A3,3 0 0 0 4.500,11 H7 M12,5 H14.500 A3,3 0 0 1 14.500,11 H12" fill="none" stroke="#6e6e6e" stroke-width="1.700"/><path d="M2,1 L17,15" stroke="#6e6e6e" stroke-width="1.700"/></svg>
<svg style="left:1548px;top:474px" width="16" height="15" viewBox="0 0 16 15"><rect x="0.800" y="0.800" width="14.400" height="13.400" fill="none" stroke="#6e6e6e" stroke-width="1.400"/><path d="M0.800,3.500 H15.200 M3.500,6.500 H12.500 M3.500,9 H12.500 M3.500,11.500 H12.500" stroke="#6e6e6e" stroke-width="1.200"/></svg>
<svg style="left:1582px;top:474px" width="15" height="15" viewBox="0 0 15 15"><rect x="0.800" y="0.800" width="13.400" height="13.400" fill="none" stroke="#6e6e6e" stroke-width="1.400"/><path d="M7.500,4 V11 M4,7.500 H11" stroke="#6e6e6e" stroke-width="1.400"/></svg>
<svg style="left:1614px;top:473px" width="14" height="16" viewBox="0 0 14 16"><path d="M0.500,3.500 H13.500 M5,3 V1 H9 V3" fill="none" stroke="#6e6e6e" stroke-width="1.400"/><path d="M2,4 L2.800,15 H11.200 L12,4" fill="none" stroke="#6e6e6e" stroke-width="1.400"/><path d="M5,6 V13 M7,6 V13 M9,6 V13" stroke="#6e6e6e" stroke-width="1"/></svg>
<div class="a" style="left:1362px;top:493px;width:307px;height:3px;background:#3b3b3b"></div>
<div class="a" style="left:1362px;top:496px;width:307px;height:33px;background:#424242"></div>
<div class="a" style="left:1362px;top:496px;width:53px;height:33px;background:#535353;"></div>
<div class="t" style="left:1375.5px;top:503px;font-size:16px;color:#ececec;letter-spacing:-1.75px">모양</div>
<div class="a" style="left:1415px;top:496px;width:56px;height:33px;background:#4a4a4a;"></div>
<div class="t" style="left:1427px;top:503px;font-size:16px;color:#9c9c9c;letter-spacing:-1.667px">그래픽</div>
<div class="a" style="left:1472px;top:496px;width:43px;height:33px;background:#4a4a4a;"></div>
<div class="t" style="left:1485px;top:503px;font-size:16px;color:#9c9c9c;letter-spacing:-1.75px">문자</div>
<div class="a" style="left:1516px;top:496px;width:43px;height:33px;background:#4a4a4a;"></div>
<div class="t" style="left:1529px;top:503px;font-size:16px;color:#9c9c9c;letter-spacing:-2px">단락</div>
<div class="a" style="left:1560px;top:496px;width:59px;height:33px;background:#4a4a4a;overflow:hidden"><div class="t" style="left:12px;top:7px;font-size:16px;color:#9c9c9c;letter-spacing:0.300px">OpenTy</div></div>
<svg style="left:1648px;top:509px" width="13" height="10" viewBox="0 0 13 10"><path d="M0,1 H13 M0,5 H13 M0,9 H13" stroke="#c4c4c4" stroke-width="1.7"/></svg>
<div class="a" style="left:1368px;top:538px;width:294px;height:381px;border:1px solid #5e5e5e;border-radius:2px"></div>
<div class="a" style="left:1369px;top:569px;width:292px;height:1px;background:#5e5e5e"></div>
<div class="a" style="left:1369px;top:600px;width:292px;height:1px;background:#5e5e5e"></div>
<div class="a" style="left:1369px;top:631px;width:292px;height:1px;background:#5e5e5e"></div>
<div class="a" style="left:1369px;top:662px;width:292px;height:1px;background:#5e5e5e"></div>
<div class="a" style="left:1400px;top:570px;width:1px;height:92px;background:#484848"></div>
<div class="a" style="left:1372px;top:542px;width:24px;height:24px;background:#f3f4f8;border:1px solid #2a2a2a"></div>
<div class="t" style="left:1432.500px;top:547px;font-size:13.500px;font-weight:bold;color:#e8e8e8;letter-spacing:0.300px;word-spacing:3px;letter-spacing:-2.033px">선택 없음</div>
<svg style="left:1375.5px;top:580px" width="17" height="11" viewBox="0 0 17 11"><path d="M0.500,5.500 Q8.500,-3.500 16.500,5.500 Q8.500,14.500 0.500,5.500 Z" fill="#e0e0e0"/><circle cx="8.500" cy="5.500" r="3.300" fill="#535353"/><circle cx="8.500" cy="5.500" r="1.600" fill="#e0e0e0"/></svg>
<svg style="left:1375.5px;top:611px" width="17" height="11" viewBox="0 0 17 11"><path d="M0.500,5.500 Q8.500,-3.500 16.500,5.500 Q8.500,14.500 0.500,5.500 Z" fill="#e0e0e0"/><circle cx="8.500" cy="5.500" r="3.300" fill="#535353"/><circle cx="8.500" cy="5.500" r="1.600" fill="#e0e0e0"/></svg>
<svg style="left:1375.5px;top:642px" width="17" height="11" viewBox="0 0 17 11"><path d="M0.500,5.500 Q8.500,-3.500 16.500,5.500 Q8.500,14.500 0.500,5.500 Z" fill="#6a6a6a"/><circle cx="8.500" cy="5.500" r="3.300" fill="#535353"/><circle cx="8.500" cy="5.500" r="1.600" fill="#6a6a6a"/></svg>
<svg style="left:1407px;top:579px" width="8" height="12" viewBox="0 0 8 12"><path d="M1.500,1.200 L6,6 L1.500,10.800" stroke="#e6e6e6" stroke-width="1.700" fill="none"/></svg>
<svg style="left:1407px;top:610px" width="8" height="12" viewBox="0 0 8 12"><path d="M1.500,1.200 L6,6 L1.500,10.800" stroke="#e6e6e6" stroke-width="1.700" fill="none"/></svg>
<div class="t" style="left:1432px;top:578px;font-size:13.500px;color:#e8e8e8;border-bottom:1px dotted #ccc;padding-bottom:1px;letter-spacing:-1.533px">획:</div>
<div class="t" style="left:1432px;top:609px;font-size:13.500px;color:#e8e8e8;letter-spacing:-1.633px">칠:</div>
<div class="t" style="left:1432px;top:640px;font-size:13.500px;color:#e8e8e8;letter-spacing:-1.15px"><span style="border-bottom:1px dotted #ccc;padding-bottom:1px">불투명도:</span> 초기값</div>
<svg style="left:1485px;top:574px" width="22" height="22" viewBox="0 0 22 22"><rect x="0.500" y="0.500" width="21" height="21" fill="#222" stroke="#cfcfcf"/><rect x="2.500" y="2.500" width="17" height="17" fill="#fff"/><path d="M4.500,17.500 L17.500,4.500" stroke="#c3122c" stroke-width="3"/></svg>
<svg style="left:1485px;top:605px" width="22" height="22" viewBox="0 0 22 22"><rect x="0.500" y="0.500" width="21" height="21" fill="#222" stroke="#e6e6e6"/><rect x="2.500" y="2.500" width="17" height="17" fill="#f3f4f8" stroke="#fff"/></svg>
<svg style="left:1377px;top:926px" width="14" height="14" viewBox="0 0 14 14"><rect x="1.200" y="1.200" width="11.600" height="11.600" fill="none" stroke="#e0e0e0" stroke-width="2.200"/></svg>
<svg style="left:1410px;top:926px" width="15" height="14" viewBox="0 0 15 14"><rect x="0.800" y="0.800" width="13.400" height="12.400" fill="none" stroke="#cfcfcf" stroke-width="1.300"/><rect x="3.300" y="3.300" width="8.400" height="7.400" fill="#cfcfcf"/></svg>
<div class="t" style="left:1441px;top:924px;font-size:16px;font-style:italic;color:#dcdcdc;letter-spacing:-0.5px">fx<span style="font-size:7px;font-style:normal">▾</span></div>
<svg style="left:1555px;top:925px" width="15" height="15" viewBox="0 0 15 15"><circle cx="7.500" cy="7.500" r="6" fill="none" stroke="#e0e0e0" stroke-width="2"/><path d="M3.300,3.300 L11.700,11.700" stroke="#e0e0e0" stroke-width="2"/></svg>
<svg style="left:1588px;top:926px" width="14" height="14" viewBox="0 0 15 15"><rect x="0.800" y="0.800" width="13.400" height="13.400" fill="none" stroke="#6e6e6e" stroke-width="1.400"/><path d="M7.500,4 V11 M4,7.500 H11" stroke="#6e6e6e" stroke-width="1.400"/></svg>
<svg style="left:1620px;top:925px" width="14" height="16" viewBox="0 0 14 16"><path d="M0.500,3.500 H13.500 M5,3 V1 H9 V3" fill="none" stroke="#6e6e6e" stroke-width="1.400"/><path d="M2,4 L2.800,15 H11.200 L12,4" fill="none" stroke="#6e6e6e" stroke-width="1.400"/><path d="M5,6 V13 M7,6 V13 M9,6 V13" stroke="#6e6e6e" stroke-width="1"/></svg>
<div class="a" style="left:1503px;top:947px;width:25px;height:4px;background:repeating-linear-gradient(90deg,#3f3f3f 0 1.300px,transparent 1.300px 3px)"></div>
<div class="a" style="left:1362px;top:944px;width:307px;height:1px;background:#434343"></div>
<div class="a" style="left:1361px;top:953px;width:309px;height:2px;background:#161616"></div>
<div class="a" style="left:1672px;top:92px;width:248px;height:938px;background:#535353"></div>
<div class="a" style="left:1672px;top:92px;width:248px;height:34px;background:#424242"></div>
<div class="a" style="left:1672px;top:92px;width:67px;height:34px;background:#535353;"></div>
<div class="t" style="left:1685.5px;top:100px;font-size:16px;color:#ececec;letter-spacing:-1.833px">레이어</div>
<div class="a" style="left:1678px;top:134px;width:242px;height:238px;border:1px solid #5c5c5c;border-right:0"></div>
<div class="a" style="left:1678px;top:135px;width:242px;height:26px;background:#4b6584"></div>
<div class="a" style="left:1703px;top:135px;width:1px;height:26px;background:#556f8d"></div>
<div class="a" style="left:1733px;top:136px;width:4px;height:24px;background:#4f7df3"></div>
<svg style="left:1684px;top:142px" width="17" height="11" viewBox="0 0 17 11"><path d="M0.500,5.500 Q8.500,-3.500 16.500,5.500 Q8.500,14.500 0.500,5.500 Z" fill="#e4e4e4"/><circle cx="8.500" cy="5.500" r="3.300" fill="#535353"/><circle cx="8.500" cy="5.500" r="1.600" fill="#e4e4e4"/></svg>
<style>#lyeye circle:first-of-type{fill:#4b6584}</style>
<svg style="left:1746px;top:141.5px" width="8" height="12" viewBox="0 0 8 12"><path d="M1.500,1.200 L6,6 L1.500,10.800" stroke="#fff" stroke-width="1.700" fill="none"/></svg>
<svg style="left:1770px;top:137px" width="23" height="22" viewBox="0 0 23 22"><rect x="0.700" y="0.700" width="21.600" height="20.600" fill="#fff" stroke="#111" stroke-width="1.400"/><path d="M3,8 L9,5 V10 L3,13 Z" fill="#9db4d8"/><circle cx="11" cy="7" r="1.500" fill="#46baaa"/><circle cx="9" cy="12" r="3.200" fill="none" stroke="#8a8fc0" stroke-width="1"/><path d="M14,7 l3,2 l-3,2 z" fill="#b5c3dc"/><rect x="15.500" y="10" width="3" height="6" fill="#3d4a9a"/><rect x="12" y="13" width="3" height="4" fill="#f94e8c"/><rect x="17" y="15" width="3" height="3" fill="#464a57"/></svg>
<div class="t" style="left:1798.500px;top:141px;font-size:13.500px;color:#fff;letter-spacing:-0.200px;letter-spacing:-0.762px">Layer 1</div>
<div class="t" style="left:1679px;top:379px;font-size:13.500px;color:#dcdcdc;word-spacing:3px;letter-spacing:-1.673px">1 레이어</div>
<svg style="left:1773px;top:377px" width="17" height="16" viewBox="0 0 17 16"><path d="M8,3.500 H1 V15 H13 V9" fill="none" stroke="#d6d6d6" stroke-width="1.600"/><path d="M7,9.500 L15.500,1 M10,1 H15.500 V6.500" fill="none" stroke="#d6d6d6" stroke-width="1.600"/></svg>
<svg style="left:1806px;top:377px" width="16" height="16" viewBox="0 0 16 16"><circle cx="6.500" cy="6.500" r="5" fill="none" stroke="#6e6e6e" stroke-width="1.600"/><path d="M10,10 L15,15" stroke="#6e6e6e" stroke-width="2"/></svg>
<svg style="left:1838px;top:378px" width="16" height="15" viewBox="0 0 16 15"><rect x="5.500" y="5" width="9.500" height="9" fill="none" stroke="#9a9a9a" stroke-width="1.300"/><rect x="1" y="1" width="10" height="9.500" fill="#777" stroke="#d6d6d6" stroke-width="1.600"/></svg>
<svg style="left:1868px;top:377px" width="21" height="15" viewBox="0 0 21 15"><path d="M1.500,0.500 V5 H6" fill="none" stroke="#d6d6d6" stroke-width="1.800"/><path d="M5,2 L9,5 L5,8 Z" fill="#d6d6d6"/><rect x="9.500" y="3" width="10.500" height="11" fill="none" stroke="#d6d6d6" stroke-width="1.400"/><path d="M14.700,5.500 V11.500 M11.700,8.500 H17.700" stroke="#d6d6d6" stroke-width="1.400"/></svg>
<svg style="left:1905px;top:378px" width="15" height="14" viewBox="0 0 15 14"><rect x="0.800" y="0.800" width="13.400" height="12.400" fill="none" stroke="#d6d6d6" stroke-width="1.400"/><path d="M7.500,3.500 V10.500 M4,7 H11" stroke="#d6d6d6" stroke-width="1.400"/></svg>
<div class="a" style="left:1672px;top:397px;width:248px;height:3px;background:#3b3b3b"></div>
<div class="a" style="left:1672px;top:400px;width:248px;height:33px;background:#424242"></div>
<div class="a" style="left:1672px;top:400px;width:52px;height:33px;background:#535353;"></div>
<div class="t" style="left:1685px;top:407px;font-size:16px;color:#ececec;letter-spacing:-1.85px">속성</div>
<div class="a" style="left:1724px;top:400px;width:96px;height:33px;background:#4a4a4a;"></div>
<div class="t" style="left:1736px;top:407px;font-size:16px;color:#9c9c9c;letter-spacing:-1.48px">라이브러리</div>
<div class="a" style="left:1821px;top:400px;width:99px;height:33px;background:#4a4a4a;"></div>
<div class="t" style="left:1834.5px;top:407px;font-size:16px;color:#9c9c9c;word-spacing:3px;letter-spacing:-1.559px">이미지 추적</div>
<div class="t" style="left:1685px;top:448px;font-size:13.500px;color:#dadada;letter-spacing:0.300px;word-spacing:3px;letter-spacing:-2.033px">선택 없음</div>
<div class="a" style="left:1856px;top:442px;width:80px;height:25px;border:1px solid #6c6c6c;border-radius:3px;background:#4f4f4f"></div>
<div class="t" style="left:1877px;top:448px;font-size:13px;color:#f2f2f2">Tool Op</div>
<div class="a" style="left:1672px;top:474px;width:248px;height:1px;background:#484848"></div>
<div class="t" style="left:1685px;top:493px;font-size:13px;color:#d2d2d2;letter-spacing:-0.300px;letter-spacing:-0.372px">Transform</div>
<svg style="left:1684px;top:531px" width="25" height="25" viewBox="0 0 24 24"><path d="M3.500,3.500 H20.500 V20.500 H3.500 Z M3.500,12 H20.500 M12,3.500 V20.500" fill="none" stroke="#d6d6d6" stroke-width="1"/><rect x="1" y="1" width="5" height="5" fill="#535353" stroke="#d6d6d6" stroke-width="1.200"/><rect x="1" y="9.5" width="5" height="5" fill="#535353" stroke="#d6d6d6" stroke-width="1.200"/><rect x="1" y="18" width="5" height="5" fill="#535353" stroke="#d6d6d6" stroke-width="1.200"/><rect x="9.5" y="1" width="5" height="5" fill="#535353" stroke="#d6d6d6" stroke-width="1.200"/><rect x="9.5" y="9.5" width="5" height="5" fill="#fff" stroke="#d6d6d6" stroke-width="1.200"/><rect x="9.5" y="18" width="5" height="5" fill="#535353" stroke="#d6d6d6" stroke-width="1.200"/><rect x="18" y="1" width="5" height="5" fill="#535353" stroke="#d6d6d6" stroke-width="1.200"/><rect x="18" y="9.5" width="5" height="5" fill="#535353" stroke="#d6d6d6" stroke-width="1.200"/><rect x="18" y="18" width="5" height="5" fill="#535353" stroke="#d6d6d6" stroke-width="1.200"/></svg>
<div class="a" style="left:1738px;top:515px;width:71px;height:24px;background:#585858;border-radius:2px"></div>
<div class="t" style="left:1744px;top:521px;font-size:13px;color:#7c7c7c">0 mm</div>
<div class="a" style="left:1849px;top:515px;width:71px;height:24px;background:#585858;border-radius:2px"></div>
<div class="t" style="left:1855px;top:521px;font-size:13px;color:#7c7c7c">0 mm</div>
<div class="a" style="left:1738px;top:547px;width:71px;height:25px;background:#585858;border-radius:2px"></div>
<div class="t" style="left:1744px;top:553px;font-size:13px;color:#7c7c7c">0 mm</div>
<div class="a" style="left:1849px;top:547px;width:71px;height:25px;background:#585858;border-radius:2px"></div>
<div class="t" style="left:1855px;top:553px;font-size:13px;color:#7c7c7c">0 mm</div>
<div class="a" style="left:1737px;top:579px;width:70px;height:26px;background:#585858;border-radius:2px"></div>
<div class="t" style="left:1743px;top:585px;font-size:13px;color:#7c7c7c">0°</div>
<svg style="left:1789px;top:588px" width="11" height="8" viewBox="0 0 11 8"><path d="M1.2,1.2 L5.500,5.600 L9.800,1.200" stroke="#6c6c6c" stroke-width="1.700" fill="none"/></svg>
<div class="t" style="left:1721.5px;top:522px;font-size:13px;color:#dcdcdc">X:</div>
<div class="t" style="left:1721.5px;top:554px;font-size:13px;color:#dcdcdc">Y:</div>
<div class="t" style="left:1827.5px;top:522px;font-size:13px;color:#dcdcdc">W:</div>
<div class="t" style="left:1827.5px;top:554px;font-size:13px;color:#dcdcdc">H:</div>
<svg style="left:1716px;top:583px" width="20" height="12" viewBox="0 0 20 12"><path d="M1,10.500 H13.500 L10,1.500 Z" fill="none" stroke="#d6d6d6" stroke-width="1.700" stroke-linejoin="round"/><path d="M17,4 v1.600 M17,8.500 v1.600" stroke="#d6d6d6" stroke-width="1.600"/></svg>
<svg style="left:1860px;top:586px" width="18" height="15" viewBox="0 0 18 15"><path d="M1,1.500 L6.500,7.500 L1,13.500 Z" fill="none" stroke="#d6d6d6" stroke-width="1.400"/><path d="M17,1 L11,7.500 L17,14 Z" fill="#d6d6d6"/><path d="M8.700,0 V15" stroke="#d6d6d6" stroke-width="1" stroke-dasharray="1.500 1.500"/></svg>
<svg style="left:1891px;top:585px" width="15" height="18" viewBox="0 0 15 18"><path d="M1.500,1 L7.500,6.500 L13.500,1 Z" fill="#d6d6d6"/><path d="M1.500,17 L7.500,11 L13.500,17 Z" fill="none" stroke="#d6d6d6" stroke-width="1.400"/><path d="M0,8.700 H15" stroke="#d6d6d6" stroke-width="1" stroke-dasharray="1.500 1.500"/></svg>
<div class="a" style="left:1672px;top:631px;width:248px;height:1px;background:#484848"></div>
<div class="t" style="left:1685px;top:650px;font-size:13px;color:#d2d2d2;letter-spacing:-0.300px;letter-spacing:-0.333px">Appearance</div>
<div class="a" style="left:1685px;top:680px;width:22px;height:22px;background:#f3f4f8;border:1px solid #2a2a2a"></div>
<div class="t" style="left:1722.500px;top:688px;font-size:13px;color:#d2d2d2;letter-spacing:-0.452px">Fill</div>
<svg style="left:1685px;top:716px" width="22" height="22" viewBox="0 0 22 22"><rect width="22" height="22" fill="#fff"/><rect x="5.500" y="5.500" width="11" height="11" fill="#555" stroke="#222" stroke-width="1.400"/><path d="M0.500,21.500 L21.500,0.500" stroke="#e0141e" stroke-width="2.200"/></svg>
<div class="t" style="left:1722.500px;top:724px;font-size:13px;color:#f0f0f0;border-bottom:1px dotted #ccc;padding-bottom:1px;letter-spacing:-0.200px;letter-spacing:-0.53px">Stroke</div>
<div class="dd" style="left:1785px;top:714px;width:87px;height:26px;background:#4a4a4a"></div>
<div class="a" style="left:1808px;top:715px;width:41px;height:24px;background:#434343"></div>
<svg style="left:1791px;top:718.5px" width="11" height="8" viewBox="0 0 11 8"><path d="M1.2,6.500 L5.500,2 L9.800,6.500" stroke="#e6e6e6" stroke-width="1.700" fill="none"/></svg>
<svg style="left:1791px;top:728.5px" width="11" height="8" viewBox="0 0 11 8"><path d="M1.2,1.2 L5.500,5.600 L9.800,1.200" stroke="#e6e6e6" stroke-width="1.700" fill="none"/></svg>
<svg style="left:1854.5px;top:722.5px" width="11" height="8" viewBox="0 0 11 8"><path d="M1.2,1.2 L5.500,5.600 L9.800,1.200" stroke="#e6e6e6" stroke-width="1.700" fill="none"/></svg>
<svg style="left:1685px;top:753px" width="22" height="22" viewBox="0 0 22 22"><rect x="0.500" y="0.500" width="21" height="21" fill="#6f6f6f" stroke="#8c8c8c"/><path d="M1,1 h5 v5 h-5z M11,1 h5 v5 h-5z M6,6 h5 v5 h-5z M16,6 h5 v5 h-5z M1,11 h5 v5 h-5z M11,11 h5 v5 h-5z M6,16 h5 v5 h-5z M16,16 h5 v5 h-5z" fill="#5c5c5c"/></svg>
<div class="t" style="left:1722.500px;top:760px;font-size:13px;color:#f0f0f0;border-bottom:1px dotted #ccc;padding-bottom:1px;letter-spacing:-0.200px;letter-spacing:-0.254px">Opacity</div>
<div class="dd" style="left:1785px;top:750px;width:87px;height:26px;background:#4a4a4a"></div>
<div class="a" style="left:1786px;top:751px;width:63px;height:24px;background:#434343"></div>
<div class="t" style="left:1791px;top:756px;font-size:13px;color:#f0f0f0;letter-spacing:-0.300px;letter-spacing:-0.638px">100%</div>
<svg style="left:1856px;top:757px" width="8" height="12" viewBox="0 0 8 12"><path d="M1.500,1.200 L6,6 L1.500,10.800" stroke="#e6e6e6" stroke-width="1.700" fill="none"/></svg>
<div class="t" style="left:1693px;top:797px;font-size:17px;font-style:italic;color:#d6d6d6;letter-spacing:-0.5px">fx<span style="font-size:7px;font-style:normal">▾</span></div>
<div class="a" style="left:1672px;top:849px;width:248px;height:1px;background:#484848"></div>
<div class="t" style="left:1685px;top:874px;font-size:13px;color:#d2d2d2;letter-spacing:-0.300px;letter-spacing:-0.09px">Quick Actions</div>
<div class="a" style="left:1672px;top:998px;width:248px;height:2px;background:#3b3b3b"></div>
<div class="a" style="left:1672px;top:1000px;width:248px;height:30px;background:#424242"></div>
<div class="a" style="left:1672px;top:1000px;width:59px;height:30px;background:#535353;"></div>
<div class="t" style="left:1692px;top:1008px;font-size:16px;color:#ececec;letter-spacing:-2px">변형</div>
<div class="a" style="left:1731px;top:1000px;width:52px;height:30px;background:#4a4a4a;"></div>
<div class="t" style="left:1744px;top:1008px;font-size:16px;color:#9c9c9c;letter-spacing:-1.8px">정렬</div>
<svg style="left:1678px;top:1010px" width="7" height="12" viewBox="0 0 7 12"><path d="M1,4.500 L3.500,1.500 L6,4.500 M1,7.500 L3.500,10.500 L6,7.500" stroke="#c8c8c8" stroke-width="1.200" fill="none"/></svg>
<!-- ===== PATHFINDER ===== -->
<div class="a" style="left:1056px;top:475px;width:289px;height:190px;background:#535353;border-radius:4px 4px 0 0;box-shadow:0 0 0 1px #3d3d3d,1px 2px 5px rgba(0,0,0,.4);overflow:hidden">
<div class="a" style="left:0;top:0;width:290px;height:16px;background:#424242"></div>
<div class="a" style="left:0;top:16px;width:290px;height:33px;background:#424242;border-top:1px solid #383838"></div>
<div class="a" style="left:0;top:17px;width:97px;height:32px;background:#535353"></div>
</div>
<svg style="left:1307px;top:478px" width="10" height="8" viewBox="0 0 10 8"><path d="M4,0.800 L1,4 L4,7.200 Z M9,0.800 L6,4 L9,7.200 Z" fill="#d8d8d8"/></svg>
<svg style="left:1329px;top:478px" width="10" height="9" viewBox="0 0 10 9"><path d="M1.200,1 L8.800,8 M8.800,1 L1.200,8" stroke="#e6e6e6" stroke-width="2"/></svg>
<div class="t" style="left:1068.500px;top:498px;font-size:16px;color:#ececec;letter-spacing:-1.24px">패스파인더</div>
<svg style="left:1324px;top:504px" width="13" height="10" viewBox="0 0 13 10"><path d="M0,1 H13 M0,5 H13 M0,9 H13" stroke="#c4c4c4" stroke-width="1.700"/></svg>
<div class="t" style="left:1063px;top:537px;font-size:13.500px;color:#dcdcdc;letter-spacing:0.300px;word-spacing:3px;letter-spacing:-1.669px">모양 모드:</div>
<div class="t" style="left:1063px;top:603px;font-size:13.500px;color:#dcdcdc;letter-spacing:0.300px;letter-spacing:-1.594px">패스파인더:</div>
<!-- shape modes -->
<svg style="left:1070px;top:567px" width="19" height="19" viewBox="0 0 19 19"><path d="M1,1 H12 V6 H18 V18 H6 V12 H1 Z" fill="#cfcfcf"/></svg>
<svg style="left:1116px;top:567px" width="19" height="19" viewBox="0 0 19 19"><path d="M1,1 H12 V6.500 H6.500 V12 H1 Z" fill="#cfcfcf"/><rect x="6.800" y="6.800" width="10.800" height="10.800" fill="none" stroke="#cfcfcf" stroke-width="1.500"/></svg>
<svg style="left:1162px;top:567px" width="19" height="19" viewBox="0 0 19 19"><rect x="1.300" y="1.300" width="10.800" height="10.800" fill="none" stroke="#cfcfcf" stroke-width="1.500"/><rect x="6.800" y="6.800" width="10.800" height="10.800" fill="none" stroke="#cfcfcf" stroke-width="1.500"/><rect x="6.800" y="6.800" width="5.300" height="5.300" fill="#cfcfcf"/></svg>
<svg style="left:1208px;top:567px" width="19" height="19" viewBox="0 0 19 19"><path d="M1,1 H12 V6 H18 V18 H6 V12 H1 Z M7,7 V12 H12 V7 Z" fill="#cfcfcf" fill-rule="evenodd"/></svg>
<div class="a" style="left:1248px;top:564px;width:90px;height:23px;background:#585858;border-radius:2px"></div>
<div class="t" style="left:1281px;top:569px;font-size:13px;color:#787878;letter-spacing:-0.75px">확장</div>
<!-- pathfinders -->
<svg style="left:1073px;top:633px" width="19" height="19" viewBox="0 0 19 19"><path d="M1,1 H12 V6 H18 V18 H6 V12 H1 Z" fill="#cfcfcf"/><path d="M6.500,12 V6.500 H12 M12,6.500 V12 H6.500" fill="none" stroke="#535353" stroke-width="1.300"/></svg>
<svg style="left:1120px;top:633px" width="19" height="19" viewBox="0 0 19 19"><path d="M1,1 H12 V6 H6 V12 H1 Z" fill="#cfcfcf"/><rect x="7.500" y="7.500" width="10.500" height="10.500" fill="#cfcfcf"/></svg>
<svg style="left:1166px;top:633px" width="19" height="19" viewBox="0 0 19 19"><path d="M1,1 H12 V6 H18 V18 H6 V12 H1 Z" fill="#cfcfcf"/></svg>
<svg style="left:1212px;top:633px" width="19" height="19" viewBox="0 0 19 19"><rect x="1.300" y="1.300" width="10.800" height="10.800" fill="none" stroke="#8d8d8d" stroke-width="1.300"/><rect x="6.800" y="6.800" width="10.800" height="10.800" fill="none" stroke="#cfcfcf" stroke-width="1.500"/><rect x="6.800" y="6.800" width="5.300" height="5.300" fill="#cfcfcf"/></svg>
<svg style="left:1260px;top:633px" width="19" height="19" viewBox="0 0 19 19"><rect x="1.300" y="1.300" width="10.800" height="10.800" fill="none" stroke="#cfcfcf" stroke-width="1.500"/><rect x="6.800" y="6.800" width="10.800" height="10.800" fill="none" stroke="#cfcfcf" stroke-width="1.500"/></svg>
<svg style="left:1307px;top:633px" width="19" height="19" viewBox="0 0 19 19"><rect x="7" y="7" width="11" height="11" fill="#cfcfcf"/><rect x="1.300" y="1.300" width="10.800" height="10.800" fill="#535353" stroke="#cfcfcf" stroke-width="1.500"/></svg>
</body></html>
